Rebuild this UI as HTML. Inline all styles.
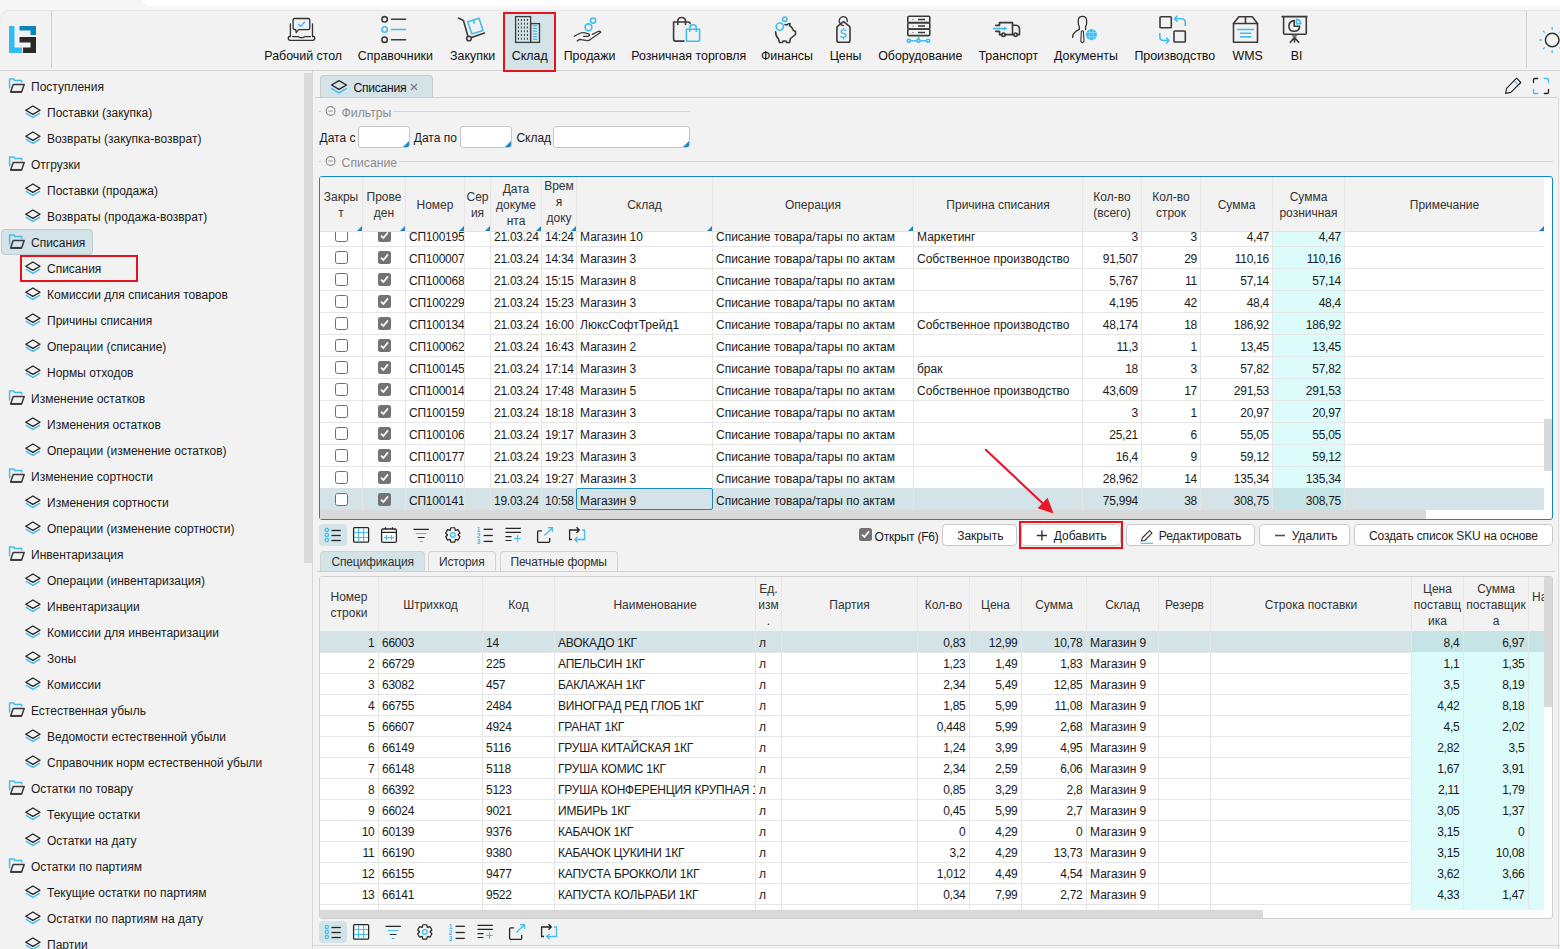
<!DOCTYPE html><html><head><meta charset="utf-8"><style>
*{box-sizing:border-box;margin:0;padding:0}
html,body{width:1560px;height:949px;overflow:hidden;background:#f2f2f2;font-family:"Liberation Sans",sans-serif;font-size:12px;color:#1a1a1a;letter-spacing:0px}
.abs{position:absolute}
.t{position:absolute;white-space:nowrap;line-height:16px}
.hl{position:absolute;height:1px}
.vl{position:absolute;width:1px}
.cell{position:absolute;white-space:nowrap;overflow:hidden;line-height:21px}
.num{letter-spacing:-0.25px}
.nm{letter-spacing:-0.22px}
.cb{position:absolute;width:13px;height:13px;border:1.3px solid #6e6e6e;border-radius:2.5px;background:#fff}
.cbc{position:absolute;width:13px;height:13px;border-radius:2.5px;background:#737373}
.btn{position:absolute;height:22px;border:1px solid #c9c9c9;border-radius:4px;background:#fff;line-height:20px;white-space:nowrap}
</style></head><body><div class="abs" style="left:0;top:0;width:1560px;height:11px;background:#f6f6f6"></div><div class="abs" style="left:143px;top:0;width:1417px;height:6px;background:#fff;border-bottom-left-radius:10px"></div><div class="hl" style="left:0;top:10px;width:1560px;background:#e6e6e6"></div><div class="abs" style="left:0;top:11px;width:1560px;height:59px;background:#f2f2f2"></div><div class="abs" style="left:0;top:10px;width:12px;height:12px;background:#f6f6f6"></div><div class="abs" style="left:0;top:10px;width:14px;height:14px;background:#f2f2f2;border-top:1px solid #e6e6e6;border-left:1px solid #e9e9e9;border-top-left-radius:9px"></div><div class="hl" style="left:0;top:70px;width:1560px;background:#d2d2d2"></div><div class="vl" style="left:51px;top:11px;height:57px;background:#cfcfcf"></div><div class="vl" style="left:1526px;top:11px;height:57px;background:#cfcfcf"></div><svg class="abs" style="left:0;top:0" width="60" height="70"><rect x="9" y="26" width="5.5" height="27" fill="#2ebcf2"/><rect x="9" y="47.5" width="13" height="5.5" fill="#2ebcf2"/><rect x="19.5" y="26" width="16.5" height="4.5" fill="#0a86bd"/><rect x="30.5" y="26" width="5.5" height="9" fill="#0a86bd"/><path d="M19.5 37H36V53H23V47.5H30.5V42.5H19.5Z" fill="#2a2a2a"/></svg><div class="abs" style="left:505px;top:14px;width:49px;height:56px;background:#d3e3e8;border-radius:3px"></div><div class="abs" style="left:503px;top:12px;width:53px;height:60px;border:2px solid #e3141c"></div><div class="t" style="left:243.2px;top:48px;width:120px;text-align:center;font-size:12.4px;color:#111">Рабочий стол</div><div class="t" style="left:335.4px;top:48px;width:120px;text-align:center;font-size:12.4px;color:#111">Справочники</div><div class="t" style="left:412.7px;top:48px;width:120px;text-align:center;font-size:12.4px;color:#111">Закупки</div><div class="t" style="left:469.70000000000005px;top:48px;width:120px;text-align:center;font-size:12.4px;color:#111">Склад</div><div class="t" style="left:529.6px;top:48px;width:120px;text-align:center;font-size:12.4px;color:#111">Продажи</div><div class="t" style="left:628.7px;top:48px;width:120px;text-align:center;font-size:12.4px;color:#111">Розничная торговля</div><div class="t" style="left:726.9px;top:48px;width:120px;text-align:center;font-size:12.4px;color:#111">Финансы</div><div class="t" style="left:785.6px;top:48px;width:120px;text-align:center;font-size:12.4px;color:#111">Цены</div><div class="t" style="left:860.3px;top:48px;width:120px;text-align:center;font-size:12.4px;color:#111">Оборудование</div><div class="t" style="left:948.3px;top:48px;width:120px;text-align:center;font-size:12.4px;color:#111">Транспорт</div><div class="t" style="left:1026px;top:48px;width:120px;text-align:center;font-size:12.4px;color:#111">Документы</div><div class="t" style="left:1114.8px;top:48px;width:120px;text-align:center;font-size:12.4px;color:#111">Производство</div><div class="t" style="left:1187.6px;top:48px;width:120px;text-align:center;font-size:12.4px;color:#111">WMS</div><div class="t" style="left:1236.5px;top:48px;width:120px;text-align:center;font-size:12.4px;color:#111">BI</div><svg class="abs" style="left:0;top:0" width="1560" height="70"><path d="M290.4 23.8V36.2M312.5 23.8V36.2" stroke="#333" stroke-width="1.3" fill="none" stroke-linecap="round" stroke-linejoin="round"/><path d="M290.4 36.5H289.5Q288.3 36.5 288.3 37.7V38.5Q288.3 40.3 290.2 40.3H312.8Q314.7 40.3 314.7 38.5V37.7Q314.7 36.5 313.5 36.5H312.5" stroke="#333" stroke-width="1.3" fill="none" stroke-linecap="round" stroke-linejoin="round"/><path d="M292.5 36.6H298.5Q299.2 37.6 300.5 37.6H302.5Q303.8 37.6 304.5 36.6H310.5" stroke="#333" stroke-width="1.3" fill="none" stroke-linecap="round" stroke-linejoin="round"/><path d="M294.5 18.5H308.4Q309.8 18.5 309.8 19.9V28.3Q309.8 29.7 308.4 29.7H298.6L296.2 32.6L295.8 29.7H294.5Q293.1 29.7 293.1 28.3V19.9Q293.1 18.5 294.5 18.5Z" stroke="#333" stroke-width="1.3" fill="none" stroke-linecap="round" stroke-linejoin="round"/><path d="M298.5 24.3L300.5 26.4L304.6 22" stroke="#41bdf0" stroke-width="1.4" fill="none" stroke-linecap="round" stroke-linejoin="round"/><circle cx="384.6" cy="19.3" r="2.7" stroke="#3a3a3a" stroke-width="1.6" fill="none" stroke-linecap="round" stroke-linejoin="round"/><path d="M391.5 19.2H405.5" stroke="#3a3a3a" stroke-width="1.6" fill="none" stroke-linecap="round" stroke-linejoin="round"/><circle cx="384.6" cy="29.5" r="2.7" stroke="#41bdf0" stroke-width="1.6" fill="none" stroke-linecap="round" stroke-linejoin="round"/><path d="M391.5 29.5H405.5" stroke="#41bdf0" stroke-width="1.6" fill="none" stroke-linecap="round" stroke-linejoin="round"/><circle cx="384.6" cy="39.7" r="2.7" stroke="#3a3a3a" stroke-width="1.6" fill="none" stroke-linecap="round" stroke-linejoin="round"/><path d="M391.5 39.7H405.5" stroke="#3a3a3a" stroke-width="1.6" fill="none" stroke-linecap="round" stroke-linejoin="round"/><path d="M458.5 18L463.5 20.6L468 36.5" stroke="#3a3a3a" stroke-width="1.6" fill="none" stroke-linecap="round" stroke-linejoin="round"/><circle cx="469" cy="38.5" r="2.3" stroke="#3a3a3a" stroke-width="1.6" fill="none" stroke-linecap="round" stroke-linejoin="round"/><path d="M471.5 37.5L484.5 33" stroke="#3a3a3a" stroke-width="1.6" fill="none" stroke-linecap="round" stroke-linejoin="round"/><path d="M467.8 21.8L479 18.2L483 30.5L471.8 34Z" stroke="#41bdf0" stroke-width="1.6" fill="none" stroke-linecap="round" stroke-linejoin="round"/><path d="M473.5 20L474.3 23" stroke="#41bdf0" stroke-width="1.6" fill="none" stroke-linecap="round" stroke-linejoin="round"/><rect x="515.6" y="16.6" width="15" height="25.8" fill="none" stroke="#3a3a3a" stroke-width="1.3"/><rect x="530.6" y="23.6" width="8.9" height="18.8" fill="none" stroke="#3a3a3a" stroke-width="1.3"/><rect x="517.9" y="19.00" width="1" height="2" fill="#3a3a3a"/><rect x="520.9" y="19.00" width="1" height="2" fill="#3a3a3a"/><rect x="523.9" y="19.00" width="1" height="2" fill="#3a3a3a"/><rect x="526.9" y="19.00" width="1" height="2" fill="#3a3a3a"/><rect x="517.9" y="22.75" width="1" height="2" fill="#3a3a3a"/><rect x="520.9" y="22.75" width="1" height="2" fill="#3a3a3a"/><rect x="523.9" y="22.75" width="1" height="2" fill="#3a3a3a"/><rect x="526.9" y="22.75" width="1" height="2" fill="#3a3a3a"/><rect x="517.9" y="26.50" width="1" height="2" fill="#3a3a3a"/><rect x="520.9" y="26.50" width="1" height="2" fill="#3a3a3a"/><rect x="523.9" y="26.50" width="1" height="2" fill="#3a3a3a"/><rect x="526.9" y="26.50" width="1" height="2" fill="#3a3a3a"/><rect x="517.9" y="30.25" width="1" height="2" fill="#3a3a3a"/><rect x="520.9" y="30.25" width="1" height="2" fill="#3a3a3a"/><rect x="523.9" y="30.25" width="1" height="2" fill="#3a3a3a"/><rect x="526.9" y="30.25" width="1" height="2" fill="#3a3a3a"/><rect x="517.9" y="34.00" width="1" height="2" fill="#3a3a3a"/><rect x="520.9" y="34.00" width="1" height="2" fill="#3a3a3a"/><rect x="523.9" y="34.00" width="1" height="2" fill="#3a3a3a"/><rect x="526.9" y="34.00" width="1" height="2" fill="#3a3a3a"/><rect x="517.9" y="37.75" width="1" height="2" fill="#3a3a3a"/><rect x="520.9" y="37.75" width="1" height="2" fill="#3a3a3a"/><rect x="523.9" y="37.75" width="1" height="2" fill="#3a3a3a"/><rect x="526.9" y="37.75" width="1" height="2" fill="#3a3a3a"/><rect x="533" y="25.2" width="4" height="1.2" fill="#41bdf0"/><rect x="533" y="27.9" width="4" height="1.2" fill="#41bdf0"/><rect x="533" y="30.6" width="4" height="1.2" fill="#41bdf0"/><rect x="533" y="33.3" width="4" height="1.2" fill="#41bdf0"/><rect x="533" y="36.0" width="4" height="1.2" fill="#41bdf0"/><rect x="533" y="38.7" width="4" height="1.2" fill="#41bdf0"/><circle cx="593.1" cy="20.6" r="2.6" stroke="#41bdf0" stroke-width="1.6" fill="none" stroke-linecap="round" stroke-linejoin="round"/><circle cx="588.5" cy="27.3" r="3.4" stroke="#41bdf0" stroke-width="1.6" fill="none" stroke-linecap="round" stroke-linejoin="round"/><path d="M574.4 36.3L580.5 33Q583.5 32 586 33.2Q589.5 33.8 589.5 35.2Q589 36.4 587 36.4H583.6" stroke="#3a3a3a" stroke-width="1.3" fill="none" stroke-linecap="round" stroke-linejoin="round"/><path d="M592.4 34.4L598 31.5Q599.8 30.8 600.8 32.3L590.2 39.5Q589 40.8 587.5 40.7L579.5 39.4L577.3 40.9" stroke="#3a3a3a" stroke-width="1.3" fill="none" stroke-linecap="round" stroke-linejoin="round"/><path d="M690.2 23.6Q690 22 688.5 22H673.6V39Q673.6 41.1 675.7 41.1H684" stroke="#3a3a3a" stroke-width="1.6" fill="none" stroke-linecap="round" stroke-linejoin="round"/><path d="M677.8 24.5V21.3Q677.8 17.5 681.7 17.5Q685.5 17.5 685.5 21.3V24.5" stroke="#3a3a3a" stroke-width="1.6" fill="none" stroke-linecap="round" stroke-linejoin="round"/><path d="M686.4 29.3H699.6V39.4Q699.6 41.3 697.7 41.3H688.3Q686.4 41.3 686.4 39.4Z" stroke="#41bdf0" stroke-width="1.6" fill="none" stroke-linecap="round" stroke-linejoin="round"/><path d="M689.8 31.5V28.2Q689.8 24.8 693 24.8Q696.3 24.8 696.3 28.2V31.5" stroke="#41bdf0" stroke-width="1.6" fill="none" stroke-linecap="round" stroke-linejoin="round"/><circle cx="784.7" cy="19.2" r="2.2" stroke="#41bdf0" stroke-width="1.6" fill="none" stroke-linecap="round" stroke-linejoin="round"/><circle cx="779.8" cy="26.6" r="3.6" stroke="#41bdf0" stroke-width="1.6" fill="none" stroke-linecap="round" stroke-linejoin="round"/><path d="M775.6 31.8Q775.5 36 778.5 39L779.5 42.5H782.5L783 41H786L786.5 42.5H789.5L790.5 38.5Q793 36.5 795.5 34.5V31.5L793.5 30.5Q792 27 789.5 25.5L790 23.5Q788 23.5 786.5 25L785 24.5" stroke="#3a3a3a" stroke-width="1.6" fill="none" stroke-linecap="round" stroke-linejoin="round"/><path d="M843.5 21.6L849.2 26.2Q850 26.9 850 28V40.2Q850 42.3 848 42.3H839Q836.9 42.3 836.9 40.2V28Q836.9 26.9 837.8 26.2Z" stroke="#3a3a3a" stroke-width="1.6" fill="none" stroke-linecap="round" stroke-linejoin="round"/><path d="M847.3 21.6A4.1 4.1 0 1 0 840.3 23.6Q841.6 25.6 843.6 25.6" stroke="#3a3a3a" stroke-width="1.4" fill="none" stroke-linecap="round"/><path d="M846 30.7Q845.3 29.8 843.5 29.8Q841.1 29.8 841.1 31.6Q841.1 33.3 843.5 33.5Q846.1 33.7 846.1 35.6Q846.1 37.4 843.5 37.4Q841.5 37.4 840.8 36.5M843.5 28.4V29.8M843.5 37.4V39" stroke="#41bdf0" stroke-width="1.3" fill="none" stroke-linecap="round"/><rect x="907.8" y="16.3" width="22" height="6.3" rx="1.2" stroke="#3a3a3a" stroke-width="1.6" fill="none" stroke-linecap="round" stroke-linejoin="round"/><rect x="907.8" y="22.8" width="22" height="6.3" rx="1.2" stroke="#3a3a3a" stroke-width="1.6" fill="none" stroke-linecap="round" stroke-linejoin="round"/><rect x="907.8" y="29.3" width="22" height="6.3" rx="1.2" stroke="#3a3a3a" stroke-width="1.6" fill="none" stroke-linecap="round" stroke-linejoin="round"/><path d="M918 19.5H925M918 26H925M918 32.5H925" stroke="#3a3a3a" stroke-width="1.4"/><circle cx="913" cy="19.5" r=".6" fill="#3a3a3a"/><circle cx="913" cy="26" r=".6" fill="#3a3a3a"/><circle cx="913" cy="32.5" r=".6" fill="#3a3a3a"/><path d="M910.5 40.8H916.5M920.5 40.8H926M918.5 37V39" stroke="#41bdf0" stroke-width="1.6" fill="none" stroke-linecap="round" stroke-linejoin="round"/><circle cx="908.8" cy="40.8" r="1.6" stroke="#41bdf0" stroke-width="1.6" fill="none" stroke-linecap="round" stroke-linejoin="round"/><circle cx="918.5" cy="40.8" r="1.6" stroke="#41bdf0" stroke-width="1.6" fill="none" stroke-linecap="round" stroke-linejoin="round"/><circle cx="928.1" cy="40.8" r="1.6" stroke="#41bdf0" stroke-width="1.6" fill="none" stroke-linecap="round" stroke-linejoin="round"/><path d="M995.8 25.4H999.5V22.6H1012.5V34.6" stroke="#3a3a3a" stroke-width="1.6" fill="none" stroke-linecap="round" stroke-linejoin="round"/><path d="M1012.5 25.2H1016Q1019.5 25.5 1019.5 29.2V34.6H1017.3" stroke="#3a3a3a" stroke-width="1.6" fill="none" stroke-linecap="round" stroke-linejoin="round"/><path d="M995.8 31.4H999.5V34.6H1001.7M1005.2 34.6H1013.8" stroke="#3a3a3a" stroke-width="1.6" fill="none" stroke-linecap="round" stroke-linejoin="round"/><circle cx="1003.4" cy="34.7" r="1.7" stroke="#3a3a3a" stroke-width="1.6" fill="none" stroke-linecap="round" stroke-linejoin="round"/><circle cx="1015.6" cy="34.7" r="1.7" stroke="#3a3a3a" stroke-width="1.6" fill="none" stroke-linecap="round" stroke-linejoin="round"/><path d="M993.6 28.6H1004.5" stroke="#41bdf0" stroke-width="1.6" stroke-linecap="round"/><path d="M1004.3 26.4L1007.4 28.6L1004.3 30.8Z" fill="#41bdf0"/><path d="M1079.3 29.2V26.4Q1078.3 25.2 1078.3 23.5V20.6Q1078.3 16.4 1082.4 16.4Q1086.6 16.4 1086.6 20.6V23.5Q1086.6 25.2 1085.6 26.4V29.6" stroke="#333" stroke-width="1.3" fill="none" stroke-linecap="round"/><path d="M1079.3 29.4Q1072.6 32.2 1072.6 37.4" stroke="#333" stroke-width="1.3" fill="none" stroke-linecap="round"/><path d="M1081.4 31L1080.8 41.4L1082.4 42.8L1084 41.4L1083.4 31Z" stroke="#333" stroke-width="1.1" fill="none" stroke-linejoin="round"/><circle cx="1091.4" cy="34.6" r="5.6" fill="#41bdf0"/><path d="M1086 32.5H1096.8M1086 36.7H1096.8M1089.6 29.2V40M1093.2 29.2V40" stroke="#fff" stroke-width=".6" opacity=".55"/><rect x="1160" y="16.8" width="11.3" height="11" rx=".8" stroke="#3a3a3a" stroke-width="1.6" fill="none" stroke-linecap="round" stroke-linejoin="round"/><rect x="1174" y="31" width="11.3" height="11" rx=".8" stroke="#3a3a3a" stroke-width="1.6" fill="none" stroke-linecap="round" stroke-linejoin="round"/><path d="M1185.3 25.5V22.5Q1185.3 18.8 1181.5 18.8H1174.5M1177 16.3L1174.5 18.8L1177 21.3" stroke="#41bdf0" stroke-width="1.6" fill="none" stroke-linecap="round" stroke-linejoin="round"/><path d="M1159.8 33.5V36.5Q1159.8 40.5 1163.5 40.5H1169M1166.5 38L1169 40.5L1166.5 43" stroke="#41bdf0" stroke-width="1.6" fill="none" stroke-linecap="round" stroke-linejoin="round"/><path d="M1238.8 16.8H1252.3L1257.5 23.5V42.2H1233.5V23.5Z" stroke="#3a3a3a" stroke-width="1.6" fill="none" stroke-linecap="round" stroke-linejoin="round"/><path d="M1233.5 23.5H1257.5M1245.5 16.8V23.5" stroke="#3a3a3a" stroke-width="1.6" fill="none" stroke-linecap="round" stroke-linejoin="round"/><path d="M1237.5 29.5H1253.5M1240.5 33.3H1250.8M1240.5 36.9H1250.8" stroke="#41bdf0" stroke-width="1.6" fill="none" stroke-linecap="round" stroke-linejoin="round"/><path d="M1281.5 16.6H1307.5" stroke="#3a3a3a" stroke-width="1.8"/><path d="M1283.6 17V33.3Q1283.6 34.3 1284.6 34.3H1305.3Q1306.3 34.3 1306.3 33.3V17" stroke="#3a3a3a" stroke-width="1.6" fill="none" stroke-linecap="round" stroke-linejoin="round"/><path d="M1290.3 42.3L1294.5 37.6L1298.7 42.3M1294.5 37.6V42" stroke="#3a3a3a" stroke-width="1.6" fill="none" stroke-linecap="round" stroke-linejoin="round"/><path d="M1291.8 35.2H1297.2M1292.5 36.8H1296.5" stroke="#555" stroke-width="1.3"/><path d="M1294.2 20.6Q1288.9 21.2 1288.9 26.2Q1289.1 31.3 1294.3 31.3Q1299.4 31.2 1299.6 26.2H1294.2Z" stroke="#3a3a3a" stroke-width="1.6" fill="none" stroke-linecap="round" stroke-linejoin="round"/><path d="M1296.5 19.4V23.7H1300.8Q1300.5 19.7 1296.5 19.4Z" stroke="#41bdf0" stroke-width="1.6" fill="none" stroke-linecap="round" stroke-linejoin="round"/><circle cx="1552.2" cy="40" r="6.8" stroke="#333" stroke-width="1.5" fill="none"/><path d="M1562.5 40.0L1565.2 40.0" stroke="#41bdf0" stroke-width="1.3"/><path d="M1559.5 47.3L1561.4 49.2" stroke="#41bdf0" stroke-width="1.3"/><path d="M1552.2 50.3L1552.2 53.0" stroke="#41bdf0" stroke-width="1.3"/><path d="M1544.9 47.3L1543.0 49.2" stroke="#41bdf0" stroke-width="1.3"/><path d="M1541.9 40.0L1539.2 40.0" stroke="#41bdf0" stroke-width="1.3"/><path d="M1544.9 32.7L1543.0 30.8" stroke="#41bdf0" stroke-width="1.3"/><path d="M1552.2 29.7L1552.2 27.0" stroke="#41bdf0" stroke-width="1.3"/><path d="M1559.5 32.7L1561.4 30.8" stroke="#41bdf0" stroke-width="1.3"/></svg><div class="abs" style="left:1px;top:229px;width:92px;height:26px;background:#d3e3e8;border:1px solid #bfcbcf;border-radius:4px"></div><div class="abs" style="left:20px;top:255px;width:118px;height:27px;border:2px solid #e3141c"></div><div class="t" style="left:31px;top:79px;font-size:12px">Поступления</div><div class="t" style="left:47px;top:105px;font-size:12px">Поставки (закупка)</div><div class="t" style="left:47px;top:131px;font-size:12px">Возвраты (закупка-возврат)</div><div class="t" style="left:31px;top:157px;font-size:12px">Отгрузки</div><div class="t" style="left:47px;top:183px;font-size:12px">Поставки (продажа)</div><div class="t" style="left:47px;top:209px;font-size:12px">Возвраты (продажа-возврат)</div><div class="t" style="left:31px;top:235px;font-size:12px">Списания</div><div class="t" style="left:47px;top:261px;font-size:12px">Списания</div><div class="t" style="left:47px;top:287px;font-size:12px">Комиссии для списания товаров</div><div class="t" style="left:47px;top:313px;font-size:12px">Причины списания</div><div class="t" style="left:47px;top:339px;font-size:12px">Операции (списание)</div><div class="t" style="left:47px;top:365px;font-size:12px">Нормы отходов</div><div class="t" style="left:31px;top:391px;font-size:12px">Изменение остатков</div><div class="t" style="left:47px;top:417px;font-size:12px">Изменения остатков</div><div class="t" style="left:47px;top:443px;font-size:12px">Операции (изменение остатков)</div><div class="t" style="left:31px;top:469px;font-size:12px">Изменение сортности</div><div class="t" style="left:47px;top:495px;font-size:12px">Изменения сортности</div><div class="t" style="left:47px;top:521px;font-size:12px">Операции (изменение сортности)</div><div class="t" style="left:31px;top:547px;font-size:12px">Инвентаризация</div><div class="t" style="left:47px;top:573px;font-size:12px">Операции (инвентаризация)</div><div class="t" style="left:47px;top:599px;font-size:12px">Инвентаризации</div><div class="t" style="left:47px;top:625px;font-size:12px">Комиссии для инвентаризации</div><div class="t" style="left:47px;top:651px;font-size:12px">Зоны</div><div class="t" style="left:47px;top:677px;font-size:12px">Комиссии</div><div class="t" style="left:31px;top:703px;font-size:12px">Естественная убыль</div><div class="t" style="left:47px;top:729px;font-size:12px">Ведомости естественной убыли</div><div class="t" style="left:47px;top:755px;font-size:12px">Справочник норм естественной убыли</div><div class="t" style="left:31px;top:781px;font-size:12px">Остатки по товару</div><div class="t" style="left:47px;top:807px;font-size:12px">Текущие остатки</div><div class="t" style="left:47px;top:833px;font-size:12px">Остатки на дату</div><div class="t" style="left:31px;top:859px;font-size:12px">Остатки по партиям</div><div class="t" style="left:47px;top:885px;font-size:12px">Текущие остатки по партиям</div><div class="t" style="left:47px;top:911px;font-size:12px">Остатки по партиям на дату</div><div class="t" style="left:47px;top:937px;font-size:12px">Партии</div><svg class="abs" style="left:0;top:0" width="60" height="949"><g transform="translate(0 0)"><path d="M9.6 88.5V79H13.8L14.8 80.6H21.6V82.5" stroke="#41bdf0" stroke-width="1.5" fill="none"/><path d="M13.2 84.6H24.2L21.6 91.9H10.6Z" stroke="#3a3a3a" stroke-width="1.5" fill="none" stroke-linejoin="round"/><path d="M10.6 91.9H21.6" stroke="#3a3a3a" stroke-width="1.9"/></g><g transform="translate(0 0)"><path d="M25.8 110.2L32.9 106L40 110.2L32.9 114.4Z" stroke="#222" stroke-width="1.3" fill="none" stroke-linejoin="round"/><path d="M25.8 113.2L32.9 117.4L40 113.2" stroke="#41bdf0" stroke-width="1.5" fill="none"/></g><g transform="translate(0 26)"><path d="M25.8 110.2L32.9 106L40 110.2L32.9 114.4Z" stroke="#222" stroke-width="1.3" fill="none" stroke-linejoin="round"/><path d="M25.8 113.2L32.9 117.4L40 113.2" stroke="#41bdf0" stroke-width="1.5" fill="none"/></g><g transform="translate(0 78)"><path d="M9.6 88.5V79H13.8L14.8 80.6H21.6V82.5" stroke="#41bdf0" stroke-width="1.5" fill="none"/><path d="M13.2 84.6H24.2L21.6 91.9H10.6Z" stroke="#3a3a3a" stroke-width="1.5" fill="none" stroke-linejoin="round"/><path d="M10.6 91.9H21.6" stroke="#3a3a3a" stroke-width="1.9"/></g><g transform="translate(0 78)"><path d="M25.8 110.2L32.9 106L40 110.2L32.9 114.4Z" stroke="#222" stroke-width="1.3" fill="none" stroke-linejoin="round"/><path d="M25.8 113.2L32.9 117.4L40 113.2" stroke="#41bdf0" stroke-width="1.5" fill="none"/></g><g transform="translate(0 104)"><path d="M25.8 110.2L32.9 106L40 110.2L32.9 114.4Z" stroke="#222" stroke-width="1.3" fill="none" stroke-linejoin="round"/><path d="M25.8 113.2L32.9 117.4L40 113.2" stroke="#41bdf0" stroke-width="1.5" fill="none"/></g><g transform="translate(0 156)"><path d="M9.6 88.5V79H13.8L14.8 80.6H21.6V82.5" stroke="#41bdf0" stroke-width="1.5" fill="none"/><path d="M13.2 84.6H24.2L21.6 91.9H10.6Z" stroke="#3a3a3a" stroke-width="1.5" fill="none" stroke-linejoin="round"/><path d="M10.6 91.9H21.6" stroke="#3a3a3a" stroke-width="1.9"/></g><g transform="translate(0 156)"><path d="M25.8 110.2L32.9 106L40 110.2L32.9 114.4Z" stroke="#222" stroke-width="1.3" fill="none" stroke-linejoin="round"/><path d="M25.8 113.2L32.9 117.4L40 113.2" stroke="#41bdf0" stroke-width="1.5" fill="none"/></g><g transform="translate(0 182)"><path d="M25.8 110.2L32.9 106L40 110.2L32.9 114.4Z" stroke="#222" stroke-width="1.3" fill="none" stroke-linejoin="round"/><path d="M25.8 113.2L32.9 117.4L40 113.2" stroke="#41bdf0" stroke-width="1.5" fill="none"/></g><g transform="translate(0 208)"><path d="M25.8 110.2L32.9 106L40 110.2L32.9 114.4Z" stroke="#222" stroke-width="1.3" fill="none" stroke-linejoin="round"/><path d="M25.8 113.2L32.9 117.4L40 113.2" stroke="#41bdf0" stroke-width="1.5" fill="none"/></g><g transform="translate(0 234)"><path d="M25.8 110.2L32.9 106L40 110.2L32.9 114.4Z" stroke="#222" stroke-width="1.3" fill="none" stroke-linejoin="round"/><path d="M25.8 113.2L32.9 117.4L40 113.2" stroke="#41bdf0" stroke-width="1.5" fill="none"/></g><g transform="translate(0 260)"><path d="M25.8 110.2L32.9 106L40 110.2L32.9 114.4Z" stroke="#222" stroke-width="1.3" fill="none" stroke-linejoin="round"/><path d="M25.8 113.2L32.9 117.4L40 113.2" stroke="#41bdf0" stroke-width="1.5" fill="none"/></g><g transform="translate(0 312)"><path d="M9.6 88.5V79H13.8L14.8 80.6H21.6V82.5" stroke="#41bdf0" stroke-width="1.5" fill="none"/><path d="M13.2 84.6H24.2L21.6 91.9H10.6Z" stroke="#3a3a3a" stroke-width="1.5" fill="none" stroke-linejoin="round"/><path d="M10.6 91.9H21.6" stroke="#3a3a3a" stroke-width="1.9"/></g><g transform="translate(0 312)"><path d="M25.8 110.2L32.9 106L40 110.2L32.9 114.4Z" stroke="#222" stroke-width="1.3" fill="none" stroke-linejoin="round"/><path d="M25.8 113.2L32.9 117.4L40 113.2" stroke="#41bdf0" stroke-width="1.5" fill="none"/></g><g transform="translate(0 338)"><path d="M25.8 110.2L32.9 106L40 110.2L32.9 114.4Z" stroke="#222" stroke-width="1.3" fill="none" stroke-linejoin="round"/><path d="M25.8 113.2L32.9 117.4L40 113.2" stroke="#41bdf0" stroke-width="1.5" fill="none"/></g><g transform="translate(0 390)"><path d="M9.6 88.5V79H13.8L14.8 80.6H21.6V82.5" stroke="#41bdf0" stroke-width="1.5" fill="none"/><path d="M13.2 84.6H24.2L21.6 91.9H10.6Z" stroke="#3a3a3a" stroke-width="1.5" fill="none" stroke-linejoin="round"/><path d="M10.6 91.9H21.6" stroke="#3a3a3a" stroke-width="1.9"/></g><g transform="translate(0 390)"><path d="M25.8 110.2L32.9 106L40 110.2L32.9 114.4Z" stroke="#222" stroke-width="1.3" fill="none" stroke-linejoin="round"/><path d="M25.8 113.2L32.9 117.4L40 113.2" stroke="#41bdf0" stroke-width="1.5" fill="none"/></g><g transform="translate(0 416)"><path d="M25.8 110.2L32.9 106L40 110.2L32.9 114.4Z" stroke="#222" stroke-width="1.3" fill="none" stroke-linejoin="round"/><path d="M25.8 113.2L32.9 117.4L40 113.2" stroke="#41bdf0" stroke-width="1.5" fill="none"/></g><g transform="translate(0 468)"><path d="M9.6 88.5V79H13.8L14.8 80.6H21.6V82.5" stroke="#41bdf0" stroke-width="1.5" fill="none"/><path d="M13.2 84.6H24.2L21.6 91.9H10.6Z" stroke="#3a3a3a" stroke-width="1.5" fill="none" stroke-linejoin="round"/><path d="M10.6 91.9H21.6" stroke="#3a3a3a" stroke-width="1.9"/></g><g transform="translate(0 468)"><path d="M25.8 110.2L32.9 106L40 110.2L32.9 114.4Z" stroke="#222" stroke-width="1.3" fill="none" stroke-linejoin="round"/><path d="M25.8 113.2L32.9 117.4L40 113.2" stroke="#41bdf0" stroke-width="1.5" fill="none"/></g><g transform="translate(0 494)"><path d="M25.8 110.2L32.9 106L40 110.2L32.9 114.4Z" stroke="#222" stroke-width="1.3" fill="none" stroke-linejoin="round"/><path d="M25.8 113.2L32.9 117.4L40 113.2" stroke="#41bdf0" stroke-width="1.5" fill="none"/></g><g transform="translate(0 520)"><path d="M25.8 110.2L32.9 106L40 110.2L32.9 114.4Z" stroke="#222" stroke-width="1.3" fill="none" stroke-linejoin="round"/><path d="M25.8 113.2L32.9 117.4L40 113.2" stroke="#41bdf0" stroke-width="1.5" fill="none"/></g><g transform="translate(0 546)"><path d="M25.8 110.2L32.9 106L40 110.2L32.9 114.4Z" stroke="#222" stroke-width="1.3" fill="none" stroke-linejoin="round"/><path d="M25.8 113.2L32.9 117.4L40 113.2" stroke="#41bdf0" stroke-width="1.5" fill="none"/></g><g transform="translate(0 572)"><path d="M25.8 110.2L32.9 106L40 110.2L32.9 114.4Z" stroke="#222" stroke-width="1.3" fill="none" stroke-linejoin="round"/><path d="M25.8 113.2L32.9 117.4L40 113.2" stroke="#41bdf0" stroke-width="1.5" fill="none"/></g><g transform="translate(0 624)"><path d="M9.6 88.5V79H13.8L14.8 80.6H21.6V82.5" stroke="#41bdf0" stroke-width="1.5" fill="none"/><path d="M13.2 84.6H24.2L21.6 91.9H10.6Z" stroke="#3a3a3a" stroke-width="1.5" fill="none" stroke-linejoin="round"/><path d="M10.6 91.9H21.6" stroke="#3a3a3a" stroke-width="1.9"/></g><g transform="translate(0 624)"><path d="M25.8 110.2L32.9 106L40 110.2L32.9 114.4Z" stroke="#222" stroke-width="1.3" fill="none" stroke-linejoin="round"/><path d="M25.8 113.2L32.9 117.4L40 113.2" stroke="#41bdf0" stroke-width="1.5" fill="none"/></g><g transform="translate(0 650)"><path d="M25.8 110.2L32.9 106L40 110.2L32.9 114.4Z" stroke="#222" stroke-width="1.3" fill="none" stroke-linejoin="round"/><path d="M25.8 113.2L32.9 117.4L40 113.2" stroke="#41bdf0" stroke-width="1.5" fill="none"/></g><g transform="translate(0 702)"><path d="M9.6 88.5V79H13.8L14.8 80.6H21.6V82.5" stroke="#41bdf0" stroke-width="1.5" fill="none"/><path d="M13.2 84.6H24.2L21.6 91.9H10.6Z" stroke="#3a3a3a" stroke-width="1.5" fill="none" stroke-linejoin="round"/><path d="M10.6 91.9H21.6" stroke="#3a3a3a" stroke-width="1.9"/></g><g transform="translate(0 702)"><path d="M25.8 110.2L32.9 106L40 110.2L32.9 114.4Z" stroke="#222" stroke-width="1.3" fill="none" stroke-linejoin="round"/><path d="M25.8 113.2L32.9 117.4L40 113.2" stroke="#41bdf0" stroke-width="1.5" fill="none"/></g><g transform="translate(0 728)"><path d="M25.8 110.2L32.9 106L40 110.2L32.9 114.4Z" stroke="#222" stroke-width="1.3" fill="none" stroke-linejoin="round"/><path d="M25.8 113.2L32.9 117.4L40 113.2" stroke="#41bdf0" stroke-width="1.5" fill="none"/></g><g transform="translate(0 780)"><path d="M9.6 88.5V79H13.8L14.8 80.6H21.6V82.5" stroke="#41bdf0" stroke-width="1.5" fill="none"/><path d="M13.2 84.6H24.2L21.6 91.9H10.6Z" stroke="#3a3a3a" stroke-width="1.5" fill="none" stroke-linejoin="round"/><path d="M10.6 91.9H21.6" stroke="#3a3a3a" stroke-width="1.9"/></g><g transform="translate(0 780)"><path d="M25.8 110.2L32.9 106L40 110.2L32.9 114.4Z" stroke="#222" stroke-width="1.3" fill="none" stroke-linejoin="round"/><path d="M25.8 113.2L32.9 117.4L40 113.2" stroke="#41bdf0" stroke-width="1.5" fill="none"/></g><g transform="translate(0 806)"><path d="M25.8 110.2L32.9 106L40 110.2L32.9 114.4Z" stroke="#222" stroke-width="1.3" fill="none" stroke-linejoin="round"/><path d="M25.8 113.2L32.9 117.4L40 113.2" stroke="#41bdf0" stroke-width="1.5" fill="none"/></g><g transform="translate(0 832)"><path d="M25.8 110.2L32.9 106L40 110.2L32.9 114.4Z" stroke="#222" stroke-width="1.3" fill="none" stroke-linejoin="round"/><path d="M25.8 113.2L32.9 117.4L40 113.2" stroke="#41bdf0" stroke-width="1.5" fill="none"/></g></svg><div class="abs" style="left:304px;top:73px;width:8px;height:490px;background:#dadada"></div><div class="vl" style="left:312px;top:71px;height:878px;background:#d6d6d6"></div><div class="vl" style="left:1558px;top:98px;height:851px;background:#dedede"></div><div class="hl" style="left:315px;top:97px;width:1242px;background:#cfcfcf"></div><div class="abs" style="left:320px;top:75px;width:113px;height:22px;background:#d3e3e8;border:1px solid #cdcdcd;border-bottom:none;border-radius:4px 4px 0 0"></div><svg class="abs" style="left:0;top:0" width="1560" height="100"><path d="M331.6 85L339 80.6L346.5 85L339 89.4Z" stroke="#222" stroke-width="1.3" fill="none" stroke-linejoin="round"/><path d="M331.6 88.4L339 92.8L346.5 88.4" stroke="#41bdf0" stroke-width="1.5" fill="none"/><path d="M411 84L417 90M417 84L411 90" stroke="#777" stroke-width="1.1"/><path d="M1505.6 93.4L1506.6 88.3L1516.5 78.2L1520.8 82.5L1510.8 92.4Z" stroke="#222" stroke-width="1.1" fill="none" stroke-linejoin="round"/><path d="M1514.4 81.2L1518 84.7" stroke="#41bdf0" stroke-width="1.1"/><path d="M1533.5 82.5V79.8Q1533.5 78.5 1534.8 78.5H1537.7" stroke="#222" stroke-width="1.3" fill="none" stroke-linecap="round"/><path d="M1544.3 78.5H1547.2Q1548.5 78.5 1548.5 79.8V82.5" stroke="#41bdf0" stroke-width="1.3" fill="none" stroke-linecap="round"/><path d="M1533.5 89.3V92.2Q1533.5 93.5 1534.8 93.5H1537.7" stroke="#41bdf0" stroke-width="1.3" fill="none" stroke-linecap="round"/><path d="M1544.3 93.5H1547.2Q1548.5 93.5 1548.5 92.2V89.3" stroke="#222" stroke-width="1.3" fill="none" stroke-linecap="round"/></svg><div class="t" style="left:353.5px;top:79.5px;font-size:12.2px;letter-spacing:-0.3px;color:#111">Списания</div><div class="hl" style="left:319px;top:111px;width:2px;background:#cfcfcf"></div><div class="hl" style="left:393px;top:111px;width:297px;background:#d6d6d6"></div><svg class="abs" style="left:324px;top:104px" width="14" height="14"><circle cx="6.6" cy="7" r="4.4" stroke="#8a8a8a" stroke-width="1.1" fill="none"/><path d="M4.3 7H8.9" stroke="#8a8a8a" stroke-width=".9"/></svg><div class="t" style="left:341.6px;top:105px;font-size:12.2px;color:#8c8c8c;background:#f2f2f2;padding-right:2px">Фильтры</div><div class="hl" style="left:319px;top:161px;width:2px;background:#cfcfcf"></div><div class="hl" style="left:393px;top:161px;width:1160px;background:#d6d6d6"></div><svg class="abs" style="left:324px;top:154px" width="14" height="14"><circle cx="6.6" cy="7" r="4.4" stroke="#8a8a8a" stroke-width="1.1" fill="none"/><path d="M4.3 7H8.9" stroke="#8a8a8a" stroke-width=".9"/></svg><div class="t" style="left:341.6px;top:155px;font-size:12.2px;color:#8c8c8c;background:#f2f2f2;padding-right:2px">Списание</div><div class="t" style="left:319.5px;top:130px">Дата с</div><div class="abs" style="left:358px;top:126px;width:52px;height:22px;background:#fff;border:1px solid #c6c6c6;border-radius:3px;overflow:hidden"><div class="abs" style="right:0;bottom:0;width:0;height:0;border-left:6px solid transparent;border-bottom:6px solid #1b87bf"></div></div><div class="t" style="left:413.8px;top:130px">Дата по</div><div class="abs" style="left:460px;top:126px;width:52px;height:22px;background:#fff;border:1px solid #c6c6c6;border-radius:3px;overflow:hidden"><div class="abs" style="right:0;bottom:0;width:0;height:0;border-left:6px solid transparent;border-bottom:6px solid #1b87bf"></div></div><div class="t" style="left:516.4px;top:130px">Склад</div><div class="abs" style="left:553px;top:126px;width:137px;height:22px;background:#fff;border:1px solid #c6c6c6;border-radius:3px;overflow:hidden"><div class="abs" style="right:0;bottom:0;width:0;height:0;border-left:6px solid transparent;border-bottom:6px solid #1b87bf"></div></div><div class="abs" style="left:319px;top:176px;width:1234px;height:344px;background:#fff;border:1px solid #0d88c0;border-radius:3px"></div><div class="abs" style="left:320px;top:177px;width:1224px;height:54px;background:#f2f2f2;border-top-left-radius:2px"></div><div class="hl" style="left:320px;top:231px;width:1224px;background:#e3e3e3"></div><div class="vl" style="left:362px;top:177px;height:333px;background:#e6e6e6"></div><div class="vl" style="left:405px;top:177px;height:333px;background:#e6e6e6"></div><div class="vl" style="left:464px;top:177px;height:333px;background:#e6e6e6"></div><div class="vl" style="left:490px;top:177px;height:333px;background:#e6e6e6"></div><div class="vl" style="left:541px;top:177px;height:333px;background:#e6e6e6"></div><div class="vl" style="left:576px;top:177px;height:333px;background:#e6e6e6"></div><div class="vl" style="left:712px;top:177px;height:333px;background:#e6e6e6"></div><div class="vl" style="left:913px;top:177px;height:333px;background:#e6e6e6"></div><div class="vl" style="left:1082px;top:177px;height:333px;background:#e6e6e6"></div><div class="vl" style="left:1141px;top:177px;height:333px;background:#e6e6e6"></div><div class="vl" style="left:1200px;top:177px;height:333px;background:#e6e6e6"></div><div class="vl" style="left:1272px;top:177px;height:333px;background:#e6e6e6"></div><div class="vl" style="left:1344px;top:177px;height:333px;background:#e6e6e6"></div><div class="t" style="left:320px;top:188.5px;width:42px;text-align:center;color:#333;font-size:12px">Закры<br>т</div><div class="abs" style="left:357px;top:226px;width:0;height:0;border-left:5px solid transparent;border-bottom:5px solid #1b87bf"></div><div class="t" style="left:363px;top:188.5px;width:42px;text-align:center;color:#333;font-size:12px">Прове<br>ден</div><div class="abs" style="left:400px;top:226px;width:0;height:0;border-left:5px solid transparent;border-bottom:5px solid #1b87bf"></div><div class="t" style="left:406px;top:196.5px;width:58px;text-align:center;color:#333;font-size:12px">Номер</div><div class="abs" style="left:459px;top:226px;width:0;height:0;border-left:5px solid transparent;border-bottom:5px solid #1b87bf"></div><div class="t" style="left:465px;top:188.5px;width:25px;text-align:center;color:#333;font-size:12px">Сер<br>ия</div><div class="abs" style="left:485px;top:226px;width:0;height:0;border-left:5px solid transparent;border-bottom:5px solid #1b87bf"></div><div class="t" style="left:491px;top:180.5px;width:50px;text-align:center;color:#333;font-size:12px">Дата<br>докуме<br>нта</div><div class="abs" style="left:536px;top:226px;width:0;height:0;border-left:5px solid transparent;border-bottom:5px solid #1b87bf"></div><div class="t" style="left:542px;top:178.0px;width:34px;text-align:center;color:#333;font-size:12px">Врем<br>я<br>доку</div><div class="abs" style="left:571px;top:226px;width:0;height:0;border-left:5px solid transparent;border-bottom:5px solid #1b87bf"></div><div class="t" style="left:577px;top:196.5px;width:135px;text-align:center;color:#333;font-size:12px">Склад</div><div class="abs" style="left:707px;top:226px;width:0;height:0;border-left:5px solid transparent;border-bottom:5px solid #1b87bf"></div><div class="t" style="left:713px;top:196.5px;width:200px;text-align:center;color:#333;font-size:12px">Операция</div><div class="abs" style="left:908px;top:226px;width:0;height:0;border-left:5px solid transparent;border-bottom:5px solid #1b87bf"></div><div class="t" style="left:914px;top:196.5px;width:168px;text-align:center;color:#333;font-size:12px">Причина списания</div><div class="t" style="left:1083px;top:188.5px;width:58px;text-align:center;color:#333;font-size:12px">Кол-во<br>(всего)</div><div class="t" style="left:1142px;top:188.5px;width:58px;text-align:center;color:#333;font-size:12px">Кол-во<br>строк</div><div class="t" style="left:1201px;top:196.5px;width:71px;text-align:center;color:#333;font-size:12px">Сумма</div><div class="t" style="left:1273px;top:188.5px;width:71px;text-align:center;color:#333;font-size:12px">Сумма<br>розничная</div><div class="t" style="left:1345px;top:196.5px;width:199px;text-align:center;color:#333;font-size:12px">Примечание</div><div class="abs" style="left:1539px;top:226px;width:0;height:0;border-left:5px solid transparent;border-bottom:5px solid #1b87bf"></div><div class="abs" style="left:320px;top:232px;width:1224px;height:278px;overflow:hidden"><div class="abs" style="left:953px;top:-7px;width:71px;height:21px;background:#dcfbfb"></div><div class="hl" style="left:0;top:14px;width:1224px;background:#e6e6e6"></div><div class="vl" style="left:42px;top:-7px;height:22px;background:#e6e6e6"></div><div class="vl" style="left:85px;top:-7px;height:22px;background:#e6e6e6"></div><div class="vl" style="left:144px;top:-7px;height:22px;background:#e6e6e6"></div><div class="vl" style="left:170px;top:-7px;height:22px;background:#e6e6e6"></div><div class="vl" style="left:221px;top:-7px;height:22px;background:#e6e6e6"></div><div class="vl" style="left:256px;top:-7px;height:22px;background:#e6e6e6"></div><div class="vl" style="left:392px;top:-7px;height:22px;background:#e6e6e6"></div><div class="vl" style="left:593px;top:-7px;height:22px;background:#e6e6e6"></div><div class="vl" style="left:762px;top:-7px;height:22px;background:#e6e6e6"></div><div class="vl" style="left:821px;top:-7px;height:22px;background:#e6e6e6"></div><div class="vl" style="left:880px;top:-7px;height:22px;background:#e6e6e6"></div><div class="vl" style="left:952px;top:-7px;height:22px;background:#e6e6e6"></div><div class="vl" style="left:1024px;top:-7px;height:22px;background:#e6e6e6"></div><div class="cb" style="left:15px;top:-3px"></div><div class="cbc" style="left:58px;top:-3px"><svg width="13" height="13" style="position:absolute;left:0;top:0"><path d="M3 6.6L5.4 9L10 3.4" stroke="#fff" stroke-width="1.7" fill="none"/></svg></div><div class="cell num" style="left:89px;top:-5px;width:55px">СП100195</div><div class="cell num" style="left:174px;top:-5px;width:47px">21.03.24</div><div class="cell num" style="left:225px;top:-5px;width:31px">14:24</div><div class="cell " style="left:260px;top:-5px;width:132px">Магазин 10</div><div class="cell " style="left:396px;top:-5px;width:197px">Списание товара/тары по актам</div><div class="cell " style="left:597px;top:-5px;width:165px">Маркетинг</div><div class="cell num" style="left:762px;top:-5px;width:56px;text-align:right">3</div><div class="cell num" style="left:821px;top:-5px;width:56px;text-align:right">3</div><div class="cell num" style="left:880px;top:-5px;width:69px;text-align:right">4,47</div><div class="cell num" style="left:952px;top:-5px;width:69px;text-align:right">4,47</div><div class="abs" style="left:953px;top:15px;width:71px;height:21px;background:#dcfbfb"></div><div class="hl" style="left:0;top:36px;width:1224px;background:#e6e6e6"></div><div class="vl" style="left:42px;top:15px;height:22px;background:#e6e6e6"></div><div class="vl" style="left:85px;top:15px;height:22px;background:#e6e6e6"></div><div class="vl" style="left:144px;top:15px;height:22px;background:#e6e6e6"></div><div class="vl" style="left:170px;top:15px;height:22px;background:#e6e6e6"></div><div class="vl" style="left:221px;top:15px;height:22px;background:#e6e6e6"></div><div class="vl" style="left:256px;top:15px;height:22px;background:#e6e6e6"></div><div class="vl" style="left:392px;top:15px;height:22px;background:#e6e6e6"></div><div class="vl" style="left:593px;top:15px;height:22px;background:#e6e6e6"></div><div class="vl" style="left:762px;top:15px;height:22px;background:#e6e6e6"></div><div class="vl" style="left:821px;top:15px;height:22px;background:#e6e6e6"></div><div class="vl" style="left:880px;top:15px;height:22px;background:#e6e6e6"></div><div class="vl" style="left:952px;top:15px;height:22px;background:#e6e6e6"></div><div class="vl" style="left:1024px;top:15px;height:22px;background:#e6e6e6"></div><div class="cb" style="left:15px;top:19px"></div><div class="cbc" style="left:58px;top:19px"><svg width="13" height="13" style="position:absolute;left:0;top:0"><path d="M3 6.6L5.4 9L10 3.4" stroke="#fff" stroke-width="1.7" fill="none"/></svg></div><div class="cell num" style="left:89px;top:17px;width:55px">СП100007</div><div class="cell num" style="left:174px;top:17px;width:47px">21.03.24</div><div class="cell num" style="left:225px;top:17px;width:31px">14:34</div><div class="cell " style="left:260px;top:17px;width:132px">Магазин 3</div><div class="cell " style="left:396px;top:17px;width:197px">Списание товара/тары по актам</div><div class="cell " style="left:597px;top:17px;width:165px">Собственное производство</div><div class="cell num" style="left:762px;top:17px;width:56px;text-align:right">91,507</div><div class="cell num" style="left:821px;top:17px;width:56px;text-align:right">29</div><div class="cell num" style="left:880px;top:17px;width:69px;text-align:right">110,16</div><div class="cell num" style="left:952px;top:17px;width:69px;text-align:right">110,16</div><div class="abs" style="left:953px;top:37px;width:71px;height:21px;background:#dcfbfb"></div><div class="hl" style="left:0;top:58px;width:1224px;background:#e6e6e6"></div><div class="vl" style="left:42px;top:37px;height:22px;background:#e6e6e6"></div><div class="vl" style="left:85px;top:37px;height:22px;background:#e6e6e6"></div><div class="vl" style="left:144px;top:37px;height:22px;background:#e6e6e6"></div><div class="vl" style="left:170px;top:37px;height:22px;background:#e6e6e6"></div><div class="vl" style="left:221px;top:37px;height:22px;background:#e6e6e6"></div><div class="vl" style="left:256px;top:37px;height:22px;background:#e6e6e6"></div><div class="vl" style="left:392px;top:37px;height:22px;background:#e6e6e6"></div><div class="vl" style="left:593px;top:37px;height:22px;background:#e6e6e6"></div><div class="vl" style="left:762px;top:37px;height:22px;background:#e6e6e6"></div><div class="vl" style="left:821px;top:37px;height:22px;background:#e6e6e6"></div><div class="vl" style="left:880px;top:37px;height:22px;background:#e6e6e6"></div><div class="vl" style="left:952px;top:37px;height:22px;background:#e6e6e6"></div><div class="vl" style="left:1024px;top:37px;height:22px;background:#e6e6e6"></div><div class="cb" style="left:15px;top:41px"></div><div class="cbc" style="left:58px;top:41px"><svg width="13" height="13" style="position:absolute;left:0;top:0"><path d="M3 6.6L5.4 9L10 3.4" stroke="#fff" stroke-width="1.7" fill="none"/></svg></div><div class="cell num" style="left:89px;top:39px;width:55px">СП100068</div><div class="cell num" style="left:174px;top:39px;width:47px">21.03.24</div><div class="cell num" style="left:225px;top:39px;width:31px">15:15</div><div class="cell " style="left:260px;top:39px;width:132px">Магазин 8</div><div class="cell " style="left:396px;top:39px;width:197px">Списание товара/тары по актам</div><div class="cell " style="left:597px;top:39px;width:165px"></div><div class="cell num" style="left:762px;top:39px;width:56px;text-align:right">5,767</div><div class="cell num" style="left:821px;top:39px;width:56px;text-align:right">11</div><div class="cell num" style="left:880px;top:39px;width:69px;text-align:right">57,14</div><div class="cell num" style="left:952px;top:39px;width:69px;text-align:right">57,14</div><div class="abs" style="left:953px;top:59px;width:71px;height:21px;background:#dcfbfb"></div><div class="hl" style="left:0;top:80px;width:1224px;background:#e6e6e6"></div><div class="vl" style="left:42px;top:59px;height:22px;background:#e6e6e6"></div><div class="vl" style="left:85px;top:59px;height:22px;background:#e6e6e6"></div><div class="vl" style="left:144px;top:59px;height:22px;background:#e6e6e6"></div><div class="vl" style="left:170px;top:59px;height:22px;background:#e6e6e6"></div><div class="vl" style="left:221px;top:59px;height:22px;background:#e6e6e6"></div><div class="vl" style="left:256px;top:59px;height:22px;background:#e6e6e6"></div><div class="vl" style="left:392px;top:59px;height:22px;background:#e6e6e6"></div><div class="vl" style="left:593px;top:59px;height:22px;background:#e6e6e6"></div><div class="vl" style="left:762px;top:59px;height:22px;background:#e6e6e6"></div><div class="vl" style="left:821px;top:59px;height:22px;background:#e6e6e6"></div><div class="vl" style="left:880px;top:59px;height:22px;background:#e6e6e6"></div><div class="vl" style="left:952px;top:59px;height:22px;background:#e6e6e6"></div><div class="vl" style="left:1024px;top:59px;height:22px;background:#e6e6e6"></div><div class="cb" style="left:15px;top:63px"></div><div class="cbc" style="left:58px;top:63px"><svg width="13" height="13" style="position:absolute;left:0;top:0"><path d="M3 6.6L5.4 9L10 3.4" stroke="#fff" stroke-width="1.7" fill="none"/></svg></div><div class="cell num" style="left:89px;top:61px;width:55px">СП100229</div><div class="cell num" style="left:174px;top:61px;width:47px">21.03.24</div><div class="cell num" style="left:225px;top:61px;width:31px">15:23</div><div class="cell " style="left:260px;top:61px;width:132px">Магазин 3</div><div class="cell " style="left:396px;top:61px;width:197px">Списание товара/тары по актам</div><div class="cell " style="left:597px;top:61px;width:165px"></div><div class="cell num" style="left:762px;top:61px;width:56px;text-align:right">4,195</div><div class="cell num" style="left:821px;top:61px;width:56px;text-align:right">42</div><div class="cell num" style="left:880px;top:61px;width:69px;text-align:right">48,4</div><div class="cell num" style="left:952px;top:61px;width:69px;text-align:right">48,4</div><div class="abs" style="left:953px;top:81px;width:71px;height:21px;background:#dcfbfb"></div><div class="hl" style="left:0;top:102px;width:1224px;background:#e6e6e6"></div><div class="vl" style="left:42px;top:81px;height:22px;background:#e6e6e6"></div><div class="vl" style="left:85px;top:81px;height:22px;background:#e6e6e6"></div><div class="vl" style="left:144px;top:81px;height:22px;background:#e6e6e6"></div><div class="vl" style="left:170px;top:81px;height:22px;background:#e6e6e6"></div><div class="vl" style="left:221px;top:81px;height:22px;background:#e6e6e6"></div><div class="vl" style="left:256px;top:81px;height:22px;background:#e6e6e6"></div><div class="vl" style="left:392px;top:81px;height:22px;background:#e6e6e6"></div><div class="vl" style="left:593px;top:81px;height:22px;background:#e6e6e6"></div><div class="vl" style="left:762px;top:81px;height:22px;background:#e6e6e6"></div><div class="vl" style="left:821px;top:81px;height:22px;background:#e6e6e6"></div><div class="vl" style="left:880px;top:81px;height:22px;background:#e6e6e6"></div><div class="vl" style="left:952px;top:81px;height:22px;background:#e6e6e6"></div><div class="vl" style="left:1024px;top:81px;height:22px;background:#e6e6e6"></div><div class="cb" style="left:15px;top:85px"></div><div class="cbc" style="left:58px;top:85px"><svg width="13" height="13" style="position:absolute;left:0;top:0"><path d="M3 6.6L5.4 9L10 3.4" stroke="#fff" stroke-width="1.7" fill="none"/></svg></div><div class="cell num" style="left:89px;top:83px;width:55px">СП100134</div><div class="cell num" style="left:174px;top:83px;width:47px">21.03.24</div><div class="cell num" style="left:225px;top:83px;width:31px">16:00</div><div class="cell " style="left:260px;top:83px;width:132px">ЛюксСофтТрейд1</div><div class="cell " style="left:396px;top:83px;width:197px">Списание товара/тары по актам</div><div class="cell " style="left:597px;top:83px;width:165px">Собственное производство</div><div class="cell num" style="left:762px;top:83px;width:56px;text-align:right">48,174</div><div class="cell num" style="left:821px;top:83px;width:56px;text-align:right">18</div><div class="cell num" style="left:880px;top:83px;width:69px;text-align:right">186,92</div><div class="cell num" style="left:952px;top:83px;width:69px;text-align:right">186,92</div><div class="abs" style="left:953px;top:103px;width:71px;height:21px;background:#dcfbfb"></div><div class="hl" style="left:0;top:124px;width:1224px;background:#e6e6e6"></div><div class="vl" style="left:42px;top:103px;height:22px;background:#e6e6e6"></div><div class="vl" style="left:85px;top:103px;height:22px;background:#e6e6e6"></div><div class="vl" style="left:144px;top:103px;height:22px;background:#e6e6e6"></div><div class="vl" style="left:170px;top:103px;height:22px;background:#e6e6e6"></div><div class="vl" style="left:221px;top:103px;height:22px;background:#e6e6e6"></div><div class="vl" style="left:256px;top:103px;height:22px;background:#e6e6e6"></div><div class="vl" style="left:392px;top:103px;height:22px;background:#e6e6e6"></div><div class="vl" style="left:593px;top:103px;height:22px;background:#e6e6e6"></div><div class="vl" style="left:762px;top:103px;height:22px;background:#e6e6e6"></div><div class="vl" style="left:821px;top:103px;height:22px;background:#e6e6e6"></div><div class="vl" style="left:880px;top:103px;height:22px;background:#e6e6e6"></div><div class="vl" style="left:952px;top:103px;height:22px;background:#e6e6e6"></div><div class="vl" style="left:1024px;top:103px;height:22px;background:#e6e6e6"></div><div class="cb" style="left:15px;top:107px"></div><div class="cbc" style="left:58px;top:107px"><svg width="13" height="13" style="position:absolute;left:0;top:0"><path d="M3 6.6L5.4 9L10 3.4" stroke="#fff" stroke-width="1.7" fill="none"/></svg></div><div class="cell num" style="left:89px;top:105px;width:55px">СП100062</div><div class="cell num" style="left:174px;top:105px;width:47px">21.03.24</div><div class="cell num" style="left:225px;top:105px;width:31px">16:43</div><div class="cell " style="left:260px;top:105px;width:132px">Магазин 2</div><div class="cell " style="left:396px;top:105px;width:197px">Списание товара/тары по актам</div><div class="cell " style="left:597px;top:105px;width:165px"></div><div class="cell num" style="left:762px;top:105px;width:56px;text-align:right">11,3</div><div class="cell num" style="left:821px;top:105px;width:56px;text-align:right">1</div><div class="cell num" style="left:880px;top:105px;width:69px;text-align:right">13,45</div><div class="cell num" style="left:952px;top:105px;width:69px;text-align:right">13,45</div><div class="abs" style="left:953px;top:125px;width:71px;height:21px;background:#dcfbfb"></div><div class="hl" style="left:0;top:146px;width:1224px;background:#e6e6e6"></div><div class="vl" style="left:42px;top:125px;height:22px;background:#e6e6e6"></div><div class="vl" style="left:85px;top:125px;height:22px;background:#e6e6e6"></div><div class="vl" style="left:144px;top:125px;height:22px;background:#e6e6e6"></div><div class="vl" style="left:170px;top:125px;height:22px;background:#e6e6e6"></div><div class="vl" style="left:221px;top:125px;height:22px;background:#e6e6e6"></div><div class="vl" style="left:256px;top:125px;height:22px;background:#e6e6e6"></div><div class="vl" style="left:392px;top:125px;height:22px;background:#e6e6e6"></div><div class="vl" style="left:593px;top:125px;height:22px;background:#e6e6e6"></div><div class="vl" style="left:762px;top:125px;height:22px;background:#e6e6e6"></div><div class="vl" style="left:821px;top:125px;height:22px;background:#e6e6e6"></div><div class="vl" style="left:880px;top:125px;height:22px;background:#e6e6e6"></div><div class="vl" style="left:952px;top:125px;height:22px;background:#e6e6e6"></div><div class="vl" style="left:1024px;top:125px;height:22px;background:#e6e6e6"></div><div class="cb" style="left:15px;top:129px"></div><div class="cbc" style="left:58px;top:129px"><svg width="13" height="13" style="position:absolute;left:0;top:0"><path d="M3 6.6L5.4 9L10 3.4" stroke="#fff" stroke-width="1.7" fill="none"/></svg></div><div class="cell num" style="left:89px;top:127px;width:55px">СП100145</div><div class="cell num" style="left:174px;top:127px;width:47px">21.03.24</div><div class="cell num" style="left:225px;top:127px;width:31px">17:14</div><div class="cell " style="left:260px;top:127px;width:132px">Магазин 3</div><div class="cell " style="left:396px;top:127px;width:197px">Списание товара/тары по актам</div><div class="cell " style="left:597px;top:127px;width:165px">брак</div><div class="cell num" style="left:762px;top:127px;width:56px;text-align:right">18</div><div class="cell num" style="left:821px;top:127px;width:56px;text-align:right">3</div><div class="cell num" style="left:880px;top:127px;width:69px;text-align:right">57,82</div><div class="cell num" style="left:952px;top:127px;width:69px;text-align:right">57,82</div><div class="abs" style="left:953px;top:147px;width:71px;height:21px;background:#dcfbfb"></div><div class="hl" style="left:0;top:168px;width:1224px;background:#e6e6e6"></div><div class="vl" style="left:42px;top:147px;height:22px;background:#e6e6e6"></div><div class="vl" style="left:85px;top:147px;height:22px;background:#e6e6e6"></div><div class="vl" style="left:144px;top:147px;height:22px;background:#e6e6e6"></div><div class="vl" style="left:170px;top:147px;height:22px;background:#e6e6e6"></div><div class="vl" style="left:221px;top:147px;height:22px;background:#e6e6e6"></div><div class="vl" style="left:256px;top:147px;height:22px;background:#e6e6e6"></div><div class="vl" style="left:392px;top:147px;height:22px;background:#e6e6e6"></div><div class="vl" style="left:593px;top:147px;height:22px;background:#e6e6e6"></div><div class="vl" style="left:762px;top:147px;height:22px;background:#e6e6e6"></div><div class="vl" style="left:821px;top:147px;height:22px;background:#e6e6e6"></div><div class="vl" style="left:880px;top:147px;height:22px;background:#e6e6e6"></div><div class="vl" style="left:952px;top:147px;height:22px;background:#e6e6e6"></div><div class="vl" style="left:1024px;top:147px;height:22px;background:#e6e6e6"></div><div class="cb" style="left:15px;top:151px"></div><div class="cbc" style="left:58px;top:151px"><svg width="13" height="13" style="position:absolute;left:0;top:0"><path d="M3 6.6L5.4 9L10 3.4" stroke="#fff" stroke-width="1.7" fill="none"/></svg></div><div class="cell num" style="left:89px;top:149px;width:55px">СП100014</div><div class="cell num" style="left:174px;top:149px;width:47px">21.03.24</div><div class="cell num" style="left:225px;top:149px;width:31px">17:48</div><div class="cell " style="left:260px;top:149px;width:132px">Магазин 5</div><div class="cell " style="left:396px;top:149px;width:197px">Списание товара/тары по актам</div><div class="cell " style="left:597px;top:149px;width:165px">Собственное производство</div><div class="cell num" style="left:762px;top:149px;width:56px;text-align:right">43,609</div><div class="cell num" style="left:821px;top:149px;width:56px;text-align:right">17</div><div class="cell num" style="left:880px;top:149px;width:69px;text-align:right">291,53</div><div class="cell num" style="left:952px;top:149px;width:69px;text-align:right">291,53</div><div class="abs" style="left:953px;top:169px;width:71px;height:21px;background:#dcfbfb"></div><div class="hl" style="left:0;top:190px;width:1224px;background:#e6e6e6"></div><div class="vl" style="left:42px;top:169px;height:22px;background:#e6e6e6"></div><div class="vl" style="left:85px;top:169px;height:22px;background:#e6e6e6"></div><div class="vl" style="left:144px;top:169px;height:22px;background:#e6e6e6"></div><div class="vl" style="left:170px;top:169px;height:22px;background:#e6e6e6"></div><div class="vl" style="left:221px;top:169px;height:22px;background:#e6e6e6"></div><div class="vl" style="left:256px;top:169px;height:22px;background:#e6e6e6"></div><div class="vl" style="left:392px;top:169px;height:22px;background:#e6e6e6"></div><div class="vl" style="left:593px;top:169px;height:22px;background:#e6e6e6"></div><div class="vl" style="left:762px;top:169px;height:22px;background:#e6e6e6"></div><div class="vl" style="left:821px;top:169px;height:22px;background:#e6e6e6"></div><div class="vl" style="left:880px;top:169px;height:22px;background:#e6e6e6"></div><div class="vl" style="left:952px;top:169px;height:22px;background:#e6e6e6"></div><div class="vl" style="left:1024px;top:169px;height:22px;background:#e6e6e6"></div><div class="cb" style="left:15px;top:173px"></div><div class="cbc" style="left:58px;top:173px"><svg width="13" height="13" style="position:absolute;left:0;top:0"><path d="M3 6.6L5.4 9L10 3.4" stroke="#fff" stroke-width="1.7" fill="none"/></svg></div><div class="cell num" style="left:89px;top:171px;width:55px">СП100159</div><div class="cell num" style="left:174px;top:171px;width:47px">21.03.24</div><div class="cell num" style="left:225px;top:171px;width:31px">18:18</div><div class="cell " style="left:260px;top:171px;width:132px">Магазин 3</div><div class="cell " style="left:396px;top:171px;width:197px">Списание товара/тары по актам</div><div class="cell " style="left:597px;top:171px;width:165px"></div><div class="cell num" style="left:762px;top:171px;width:56px;text-align:right">3</div><div class="cell num" style="left:821px;top:171px;width:56px;text-align:right">1</div><div class="cell num" style="left:880px;top:171px;width:69px;text-align:right">20,97</div><div class="cell num" style="left:952px;top:171px;width:69px;text-align:right">20,97</div><div class="abs" style="left:953px;top:191px;width:71px;height:21px;background:#dcfbfb"></div><div class="hl" style="left:0;top:212px;width:1224px;background:#e6e6e6"></div><div class="vl" style="left:42px;top:191px;height:22px;background:#e6e6e6"></div><div class="vl" style="left:85px;top:191px;height:22px;background:#e6e6e6"></div><div class="vl" style="left:144px;top:191px;height:22px;background:#e6e6e6"></div><div class="vl" style="left:170px;top:191px;height:22px;background:#e6e6e6"></div><div class="vl" style="left:221px;top:191px;height:22px;background:#e6e6e6"></div><div class="vl" style="left:256px;top:191px;height:22px;background:#e6e6e6"></div><div class="vl" style="left:392px;top:191px;height:22px;background:#e6e6e6"></div><div class="vl" style="left:593px;top:191px;height:22px;background:#e6e6e6"></div><div class="vl" style="left:762px;top:191px;height:22px;background:#e6e6e6"></div><div class="vl" style="left:821px;top:191px;height:22px;background:#e6e6e6"></div><div class="vl" style="left:880px;top:191px;height:22px;background:#e6e6e6"></div><div class="vl" style="left:952px;top:191px;height:22px;background:#e6e6e6"></div><div class="vl" style="left:1024px;top:191px;height:22px;background:#e6e6e6"></div><div class="cb" style="left:15px;top:195px"></div><div class="cbc" style="left:58px;top:195px"><svg width="13" height="13" style="position:absolute;left:0;top:0"><path d="M3 6.6L5.4 9L10 3.4" stroke="#fff" stroke-width="1.7" fill="none"/></svg></div><div class="cell num" style="left:89px;top:193px;width:55px">СП100106</div><div class="cell num" style="left:174px;top:193px;width:47px">21.03.24</div><div class="cell num" style="left:225px;top:193px;width:31px">19:17</div><div class="cell " style="left:260px;top:193px;width:132px">Магазин 3</div><div class="cell " style="left:396px;top:193px;width:197px">Списание товара/тары по актам</div><div class="cell " style="left:597px;top:193px;width:165px"></div><div class="cell num" style="left:762px;top:193px;width:56px;text-align:right">25,21</div><div class="cell num" style="left:821px;top:193px;width:56px;text-align:right">6</div><div class="cell num" style="left:880px;top:193px;width:69px;text-align:right">55,05</div><div class="cell num" style="left:952px;top:193px;width:69px;text-align:right">55,05</div><div class="abs" style="left:953px;top:213px;width:71px;height:21px;background:#dcfbfb"></div><div class="hl" style="left:0;top:234px;width:1224px;background:#e6e6e6"></div><div class="vl" style="left:42px;top:213px;height:22px;background:#e6e6e6"></div><div class="vl" style="left:85px;top:213px;height:22px;background:#e6e6e6"></div><div class="vl" style="left:144px;top:213px;height:22px;background:#e6e6e6"></div><div class="vl" style="left:170px;top:213px;height:22px;background:#e6e6e6"></div><div class="vl" style="left:221px;top:213px;height:22px;background:#e6e6e6"></div><div class="vl" style="left:256px;top:213px;height:22px;background:#e6e6e6"></div><div class="vl" style="left:392px;top:213px;height:22px;background:#e6e6e6"></div><div class="vl" style="left:593px;top:213px;height:22px;background:#e6e6e6"></div><div class="vl" style="left:762px;top:213px;height:22px;background:#e6e6e6"></div><div class="vl" style="left:821px;top:213px;height:22px;background:#e6e6e6"></div><div class="vl" style="left:880px;top:213px;height:22px;background:#e6e6e6"></div><div class="vl" style="left:952px;top:213px;height:22px;background:#e6e6e6"></div><div class="vl" style="left:1024px;top:213px;height:22px;background:#e6e6e6"></div><div class="cb" style="left:15px;top:217px"></div><div class="cbc" style="left:58px;top:217px"><svg width="13" height="13" style="position:absolute;left:0;top:0"><path d="M3 6.6L5.4 9L10 3.4" stroke="#fff" stroke-width="1.7" fill="none"/></svg></div><div class="cell num" style="left:89px;top:215px;width:55px">СП100177</div><div class="cell num" style="left:174px;top:215px;width:47px">21.03.24</div><div class="cell num" style="left:225px;top:215px;width:31px">19:23</div><div class="cell " style="left:260px;top:215px;width:132px">Магазин 3</div><div class="cell " style="left:396px;top:215px;width:197px">Списание товара/тары по актам</div><div class="cell " style="left:597px;top:215px;width:165px"></div><div class="cell num" style="left:762px;top:215px;width:56px;text-align:right">16,4</div><div class="cell num" style="left:821px;top:215px;width:56px;text-align:right">9</div><div class="cell num" style="left:880px;top:215px;width:69px;text-align:right">59,12</div><div class="cell num" style="left:952px;top:215px;width:69px;text-align:right">59,12</div><div class="abs" style="left:953px;top:235px;width:71px;height:21px;background:#dcfbfb"></div><div class="hl" style="left:0;top:256px;width:1224px;background:#e6e6e6"></div><div class="vl" style="left:42px;top:235px;height:22px;background:#e6e6e6"></div><div class="vl" style="left:85px;top:235px;height:22px;background:#e6e6e6"></div><div class="vl" style="left:144px;top:235px;height:22px;background:#e6e6e6"></div><div class="vl" style="left:170px;top:235px;height:22px;background:#e6e6e6"></div><div class="vl" style="left:221px;top:235px;height:22px;background:#e6e6e6"></div><div class="vl" style="left:256px;top:235px;height:22px;background:#e6e6e6"></div><div class="vl" style="left:392px;top:235px;height:22px;background:#e6e6e6"></div><div class="vl" style="left:593px;top:235px;height:22px;background:#e6e6e6"></div><div class="vl" style="left:762px;top:235px;height:22px;background:#e6e6e6"></div><div class="vl" style="left:821px;top:235px;height:22px;background:#e6e6e6"></div><div class="vl" style="left:880px;top:235px;height:22px;background:#e6e6e6"></div><div class="vl" style="left:952px;top:235px;height:22px;background:#e6e6e6"></div><div class="vl" style="left:1024px;top:235px;height:22px;background:#e6e6e6"></div><div class="cb" style="left:15px;top:239px"></div><div class="cbc" style="left:58px;top:239px"><svg width="13" height="13" style="position:absolute;left:0;top:0"><path d="M3 6.6L5.4 9L10 3.4" stroke="#fff" stroke-width="1.7" fill="none"/></svg></div><div class="cell num" style="left:89px;top:237px;width:55px">СП100110</div><div class="cell num" style="left:174px;top:237px;width:47px">21.03.24</div><div class="cell num" style="left:225px;top:237px;width:31px">19:27</div><div class="cell " style="left:260px;top:237px;width:132px">Магазин 3</div><div class="cell " style="left:396px;top:237px;width:197px">Списание товара/тары по актам</div><div class="cell " style="left:597px;top:237px;width:165px"></div><div class="cell num" style="left:762px;top:237px;width:56px;text-align:right">28,962</div><div class="cell num" style="left:821px;top:237px;width:56px;text-align:right">14</div><div class="cell num" style="left:880px;top:237px;width:69px;text-align:right">135,34</div><div class="cell num" style="left:952px;top:237px;width:69px;text-align:right">135,34</div><div class="abs" style="left:0;top:256px;width:1224px;height:22px;background:#d3e3e8"></div><div class="abs" style="left:953px;top:256px;width:71px;height:22px;background:#c6e3e5"></div><div class="vl" style="left:42px;top:257px;height:22px;background:#e6e6e6"></div><div class="vl" style="left:85px;top:257px;height:22px;background:#e6e6e6"></div><div class="vl" style="left:144px;top:257px;height:22px;background:#e6e6e6"></div><div class="vl" style="left:170px;top:257px;height:22px;background:#e6e6e6"></div><div class="vl" style="left:221px;top:257px;height:22px;background:#e6e6e6"></div><div class="vl" style="left:256px;top:257px;height:22px;background:#e6e6e6"></div><div class="vl" style="left:392px;top:257px;height:22px;background:#e6e6e6"></div><div class="vl" style="left:593px;top:257px;height:22px;background:#e6e6e6"></div><div class="vl" style="left:762px;top:257px;height:22px;background:#e6e6e6"></div><div class="vl" style="left:821px;top:257px;height:22px;background:#e6e6e6"></div><div class="vl" style="left:880px;top:257px;height:22px;background:#e6e6e6"></div><div class="vl" style="left:952px;top:257px;height:22px;background:#e6e6e6"></div><div class="vl" style="left:1024px;top:257px;height:22px;background:#e6e6e6"></div><div class="cb" style="left:15px;top:261px"></div><div class="cbc" style="left:58px;top:261px"><svg width="13" height="13" style="position:absolute;left:0;top:0"><path d="M3 6.6L5.4 9L10 3.4" stroke="#fff" stroke-width="1.7" fill="none"/></svg></div><div class="cell num" style="left:89px;top:259px;width:55px">СП100141</div><div class="cell num" style="left:174px;top:259px;width:47px">19.03.24</div><div class="cell num" style="left:225px;top:259px;width:31px">10:58</div><div class="cell " style="left:260px;top:259px;width:132px">Магазин 9</div><div class="cell " style="left:396px;top:259px;width:197px">Списание товара/тары по актам</div><div class="cell " style="left:597px;top:259px;width:165px"></div><div class="cell num" style="left:762px;top:259px;width:56px;text-align:right">75,994</div><div class="cell num" style="left:821px;top:259px;width:56px;text-align:right">38</div><div class="cell num" style="left:880px;top:259px;width:69px;text-align:right">308,75</div><div class="cell num" style="left:952px;top:259px;width:69px;text-align:right">308,75</div><div class="abs" style="left:256px;top:256px;width:137px;height:22px;border:1px solid #1b87bf;border-radius:2px"></div></div><div class="abs" style="left:1544px;top:419px;width:8px;height:52px;background:#d9d9d9"></div><div class="abs" style="left:320px;top:510px;width:1106px;height:9px;background:#d9d9d9"></div><svg class="abs" style="left:0;top:0" width="620" height="949"><rect x="319" y="524" width="28" height="22" rx="4" fill="#d3e3e8"/><circle cx="326.8" cy="530" r="1.7" stroke="#41bdf0" stroke-width="1.2" fill="none"/><path d="M331.5 530.5H340.8" stroke="#252525" stroke-width="1.3"/><circle cx="326.8" cy="535" r="1.7" stroke="#41bdf0" stroke-width="1.2" fill="none"/><path d="M331.5 535.5H340.8" stroke="#252525" stroke-width="1.3"/><circle cx="326.8" cy="540" r="1.7" stroke="#41bdf0" stroke-width="1.2" fill="none"/><path d="M331.5 540.5H340.8" stroke="#252525" stroke-width="1.3"/><rect x="353.6" y="527.6" width="15" height="14.6" rx="1" stroke="#252525" stroke-width="1.3" fill="#fff"/><path d="M358.6 528V542M363.6 528V542M354 532.5H368M354 537.5H368" stroke="#41bdf0" stroke-width="1.2"/><rect x="381.6" y="529" width="14.8" height="13.4" rx="1.5" stroke="#252525" stroke-width="1.3" fill="#fff"/><path d="M381.6 532.3H396.4M385.5 527.3V529.5M392.5 527.3V529.5" stroke="#252525" stroke-width="1.2"/><path d="M384 537.6H394M386.5 535V540.3M391.5 535V540.3" stroke="#41bdf0" stroke-width="1.2"/><path d="M413.5 529.3H428.8M417.8 537.5H424.5" stroke="#252525" stroke-width="1.2"/><path d="M415.8 533.5H426.5M419.7 541.5H422.7" stroke="#41bdf0" stroke-width="1.2"/><path d="M450.26 530.25L450.83 527.77L454.77 527.77L455.34 530.25L455.56 530.37L457.99 529.62L459.96 533.04L458.10 534.77L458.10 535.03L459.96 536.76L457.99 540.18L455.56 539.43L455.34 539.55L454.77 542.03L450.83 542.03L450.26 539.55L450.04 539.43L447.61 540.18L445.64 536.76L447.50 535.03L447.50 534.77L445.64 533.04L447.61 529.62L450.04 530.37Z" stroke="#252525" stroke-width="1.2" fill="none" stroke-linejoin="round"/><circle cx="452.8" cy="534.9" r="2.3" stroke="#41bdf0" stroke-width="1.3" fill="none"/><path d="M483.6 529.3H492.8" stroke="#252525" stroke-width="1.3"/><text x="476.8" y="532.0999999999999" font-family="Liberation Sans" font-size="6.5" font-weight="bold" fill="#41bdf0">1</text><path d="M483.6 535.5H492.8" stroke="#252525" stroke-width="1.3"/><text x="476.8" y="538.3" font-family="Liberation Sans" font-size="6.5" font-weight="bold" fill="#41bdf0">2</text><path d="M483.6 541.4H492.8" stroke="#252525" stroke-width="1.3"/><text x="476.8" y="544.1999999999999" font-family="Liberation Sans" font-size="6.5" font-weight="bold" fill="#41bdf0">3</text><path d="M505.5 528.3H520.8M505.5 532.4H520.8M505.5 536.6H511.5M505.5 540.5H511.5" stroke="#252525" stroke-width="1.2"/><path d="M514.2 538.5H520.8M517.5 535.2V541.8" stroke="#41bdf0" stroke-width="1.2"/><path d="M542 530.8H538.5Q537.6 530.8 537.6 531.7V541.3Q537.6 542.3 538.5 542.3H548.8Q549.7 542.3 549.7 541.3V538" stroke="#252525" stroke-width="1.3" fill="none"/><path d="M544.5 535.5L552.3 527.7M548 527.7H552.3V532" stroke="#41bdf0" stroke-width="1.3" fill="none"/><path d="M572 539.5H569.6V530H579.3M576.5 527.2L579.3 530L576.5 532.8" stroke="#252525" stroke-width="1.3" fill="none"/><path d="M582 530H584.5V539.5H574.8M577.6 536.7L574.8 539.5L577.6 542.3" stroke="#41bdf0" stroke-width="1.3" fill="none"/></svg><svg class="abs" style="left:0;top:0" width="620" height="949"><rect x="319" y="921" width="28" height="22" rx="4" fill="#d3e3e8"/><circle cx="326.8" cy="927" r="1.7" stroke="#41bdf0" stroke-width="1.2" fill="none"/><path d="M331.5 927.5H340.8" stroke="#252525" stroke-width="1.3"/><circle cx="326.8" cy="932" r="1.7" stroke="#41bdf0" stroke-width="1.2" fill="none"/><path d="M331.5 932.5H340.8" stroke="#252525" stroke-width="1.3"/><circle cx="326.8" cy="937" r="1.7" stroke="#41bdf0" stroke-width="1.2" fill="none"/><path d="M331.5 937.5H340.8" stroke="#252525" stroke-width="1.3"/><rect x="353.6" y="924.6" width="15" height="14.6" rx="1" stroke="#252525" stroke-width="1.3" fill="#fff"/><path d="M358.6 925V939M363.6 925V939M354 929.5H368M354 934.5H368" stroke="#41bdf0" stroke-width="1.2"/><path d="M385.5 926.3H400.8M389.8 934.5H396.5" stroke="#252525" stroke-width="1.2"/><path d="M387.8 930.5H398.5M391.7 938.5H394.7" stroke="#41bdf0" stroke-width="1.2"/><path d="M422.26 927.25L422.83 924.77L426.77 924.77L427.34 927.25L427.56 927.37L429.99 926.62L431.96 930.04L430.10 931.77L430.10 932.03L431.96 933.76L429.99 937.18L427.56 936.43L427.34 936.55L426.77 939.03L422.83 939.03L422.26 936.55L422.04 936.43L419.61 937.18L417.64 933.76L419.50 932.03L419.50 931.77L417.64 930.04L419.61 926.62L422.04 927.37Z" stroke="#252525" stroke-width="1.2" fill="none" stroke-linejoin="round"/><circle cx="424.8" cy="931.9" r="2.3" stroke="#41bdf0" stroke-width="1.3" fill="none"/><path d="M455.6 926.3H464.8" stroke="#252525" stroke-width="1.3"/><text x="448.8" y="929.0999999999999" font-family="Liberation Sans" font-size="6.5" font-weight="bold" fill="#41bdf0">1</text><path d="M455.6 932.5H464.8" stroke="#252525" stroke-width="1.3"/><text x="448.8" y="935.3" font-family="Liberation Sans" font-size="6.5" font-weight="bold" fill="#41bdf0">2</text><path d="M455.6 938.4H464.8" stroke="#252525" stroke-width="1.3"/><text x="448.8" y="941.1999999999999" font-family="Liberation Sans" font-size="6.5" font-weight="bold" fill="#41bdf0">3</text><path d="M477.5 925.3H492.79999999999995M477.5 929.4H492.79999999999995M477.5 933.6H483.5M477.5 937.5H483.5" stroke="#252525" stroke-width="1.2"/><path d="M486.20000000000005 935.5H492.79999999999995M489.5 932.2V938.8" stroke="#41bdf0" stroke-width="1.2"/><path d="M514 927.8H510.5Q509.6 927.8 509.6 928.7V938.3Q509.6 939.3 510.5 939.3H520.8Q521.7 939.3 521.7 938.3V935" stroke="#252525" stroke-width="1.3" fill="none"/><path d="M516.5 932.5L524.3 924.7M520 924.7H524.3V929" stroke="#41bdf0" stroke-width="1.3" fill="none"/><path d="M544 936.5H541.6V927H551.3M548.5 924.2L551.3 927L548.5 929.8" stroke="#252525" stroke-width="1.3" fill="none"/><path d="M554 927H556.5V936.5H546.8M549.6 933.7L546.8 936.5L549.6 939.3" stroke="#41bdf0" stroke-width="1.3" fill="none"/></svg><div class="cbc" style="left:859px;top:528px"><svg width="13" height="13" style="position:absolute;left:0;top:0"><path d="M3 6.6L5.4 9L10 3.4" stroke="#fff" stroke-width="1.7" fill="none"/></svg></div><div class="t" style="left:874.6px;top:529px;font-size:12px;letter-spacing:-0.2px">Открыт (F6)</div><div class="btn" style="left:942px;top:524px;width:75px"></div><div class="t" style="left:957.2px;top:528px;font-size:12px;color:#222;letter-spacing:0px">Закрыть</div><div class="btn" style="left:1021px;top:524px;width:100px"></div><div class="t" style="left:1053.8px;top:528px;font-size:12px;color:#222;letter-spacing:0px">Добавить</div><div class="btn" style="left:1126px;top:524px;width:129px"></div><div class="t" style="left:1158.7px;top:528px;font-size:12px;color:#222;letter-spacing:0px">Редактировать</div><div class="btn" style="left:1259px;top:524px;width:91px"></div><div class="t" style="left:1291.7px;top:528px;font-size:12px;color:#222;letter-spacing:0px">Удалить</div><div class="btn" style="left:1354px;top:524px;width:199px"></div><div class="t" style="left:1369px;top:528px;font-size:12px;color:#222;letter-spacing:-0.15px">Создать список SKU на основе</div><div class="abs" style="left:1019px;top:521px;width:104px;height:28px;border:2px solid #e3141c"></div><svg class="abs" style="left:0;top:0" width="1560" height="560"><path d="M1036.8 535.5H1047M1041.9 530.4V540.6" stroke="#333" stroke-width="1.4"/><path d="M1141.5 541L1142.2 538L1149.5 530.7L1152 533.2L1144.7 540.5Z" stroke="#333" stroke-width="1.1" fill="none" stroke-linejoin="round"/><path d="M1140.5 543.3H1153" stroke="#41bdf0" stroke-width="1.1"/><path d="M1275 535.5H1285" stroke="#555" stroke-width="1.6"/><path d="M985.8 449.8L1045 505.5" stroke="#e8192b" stroke-width="2.2" stroke-linecap="round"/><path d="M1053.6 513.5L1037.6 508.3L1047.6 497.8Z" fill="#e8192b"/></svg><div class="hl" style="left:317px;top:571px;width:1238px;background:#d0d0d0"></div><div class="abs" style="left:320px;top:551px;width:105px;height:20px;background:#d3e3e8;border:1px solid #d3d3d3;border-bottom:none;border-radius:4px 4px 0 0"></div><div class="t" style="left:331.4px;top:554px;font-size:12px;letter-spacing:-0.15px;color:#333">Спецификация</div><div class="abs" style="left:428px;top:551px;width:68px;height:20px;background:#f2f2f2;border:1px solid #d3d3d3;border-bottom:none;border-radius:4px 4px 0 0"></div><div class="t" style="left:439px;top:554px;font-size:12px;letter-spacing:-0.15px;color:#333">История</div><div class="abs" style="left:500px;top:551px;width:118px;height:20px;background:#f2f2f2;border:1px solid #d3d3d3;border-bottom:none;border-radius:4px 4px 0 0"></div><div class="t" style="left:510.5px;top:554px;font-size:12px;letter-spacing:-0.15px;color:#333">Печатные формы</div><div class="abs" style="left:319px;top:576px;width:1234px;height:343px;background:#fff;border:1px solid #cfcfcf;border-radius:3px"></div><div class="abs" style="left:320px;top:577px;width:1224px;height:54px;background:#f2f2f2;border-top-left-radius:2px"></div><div class="vl" style="left:378px;top:577px;height:333px;background:#e6e6e6"></div><div class="vl" style="left:482px;top:577px;height:333px;background:#e6e6e6"></div><div class="vl" style="left:554px;top:577px;height:333px;background:#e6e6e6"></div><div class="vl" style="left:755px;top:577px;height:333px;background:#e6e6e6"></div><div class="vl" style="left:781px;top:577px;height:333px;background:#e6e6e6"></div><div class="vl" style="left:917px;top:577px;height:333px;background:#e6e6e6"></div><div class="vl" style="left:969px;top:577px;height:333px;background:#e6e6e6"></div><div class="vl" style="left:1021px;top:577px;height:333px;background:#e6e6e6"></div><div class="vl" style="left:1086px;top:577px;height:333px;background:#e6e6e6"></div><div class="vl" style="left:1158px;top:577px;height:333px;background:#e6e6e6"></div><div class="vl" style="left:1210px;top:577px;height:333px;background:#e6e6e6"></div><div class="vl" style="left:1411px;top:577px;height:333px;background:#e6e6e6"></div><div class="vl" style="left:1463px;top:577px;height:333px;background:#e6e6e6"></div><div class="vl" style="left:1528px;top:577px;height:333px;background:#e6e6e6"></div><div class="t" style="left:320px;top:588.7px;width:58px;text-align:center;color:#333;font-size:12px;overflow:hidden">Номер<br>строки</div><div class="t" style="left:379px;top:596.7px;width:103px;text-align:center;color:#333;font-size:12px;overflow:hidden">Штрихкод</div><div class="t" style="left:483px;top:596.7px;width:71px;text-align:center;color:#333;font-size:12px;overflow:hidden">Код</div><div class="t" style="left:555px;top:596.7px;width:200px;text-align:center;color:#333;font-size:12px;overflow:hidden">Наименование</div><div class="t" style="left:756px;top:580.7px;width:25px;text-align:center;color:#333;font-size:12px;overflow:hidden">Ед.<br>изм<br>.</div><div class="t" style="left:782px;top:596.7px;width:135px;text-align:center;color:#333;font-size:12px;overflow:hidden">Партия</div><div class="t" style="left:918px;top:596.7px;width:51px;text-align:center;color:#333;font-size:12px;overflow:hidden">Кол-во</div><div class="t" style="left:970px;top:596.7px;width:51px;text-align:center;color:#333;font-size:12px;overflow:hidden">Цена</div><div class="t" style="left:1022px;top:596.7px;width:64px;text-align:center;color:#333;font-size:12px;overflow:hidden">Сумма</div><div class="t" style="left:1087px;top:596.7px;width:71px;text-align:center;color:#333;font-size:12px;overflow:hidden">Склад</div><div class="t" style="left:1159px;top:596.7px;width:51px;text-align:center;color:#333;font-size:12px;overflow:hidden">Резерв</div><div class="t" style="left:1211px;top:596.7px;width:200px;text-align:center;color:#333;font-size:12px;overflow:hidden">Строка поставки</div><div class="t" style="left:1412px;top:580.7px;width:51px;text-align:center;color:#333;font-size:12px;overflow:hidden">Цена<br>поставщ<br>ика</div><div class="t" style="left:1464px;top:580.7px;width:64px;text-align:center;color:#333;font-size:12px;overflow:hidden">Сумма<br>поставщик<br>а</div><div class="t" style="left:1532px;top:588.7px;width:12px;color:#333;font-size:12px;overflow:hidden">На</div><div class="abs" style="left:320px;top:631px;width:1224px;height:279px;overflow:hidden"><div class="abs" style="left:0;top:0px;width:1224px;height:21px;background:#d3e3e8"></div><div class="abs" style="left:1092px;top:0px;width:132px;height:21px;background:#c6e3e5"></div><div class="hl" style="left:0;top:21px;width:1224px;background:#e6e6e6"></div><div class="vl" style="left:58px;top:0px;height:21px;background:#e6e6e6"></div><div class="vl" style="left:162px;top:0px;height:21px;background:#e6e6e6"></div><div class="vl" style="left:234px;top:0px;height:21px;background:#e6e6e6"></div><div class="vl" style="left:435px;top:0px;height:21px;background:#e6e6e6"></div><div class="vl" style="left:461px;top:0px;height:21px;background:#e6e6e6"></div><div class="vl" style="left:597px;top:0px;height:21px;background:#e6e6e6"></div><div class="vl" style="left:649px;top:0px;height:21px;background:#e6e6e6"></div><div class="vl" style="left:701px;top:0px;height:21px;background:#e6e6e6"></div><div class="vl" style="left:766px;top:0px;height:21px;background:#e6e6e6"></div><div class="vl" style="left:838px;top:0px;height:21px;background:#e6e6e6"></div><div class="vl" style="left:890px;top:0px;height:21px;background:#e6e6e6"></div><div class="vl" style="left:1091px;top:0px;height:21px;background:#e6e6e6"></div><div class="vl" style="left:1143px;top:0px;height:21px;background:#e6e6e6"></div><div class="vl" style="left:1208px;top:0px;height:21px;background:#e6e6e6"></div><div class="cell num" style="left:-1px;top:2px;width:55.5px;text-align:right">1</div><div class="cell num" style="left:62px;top:2px;width:100px">66003</div><div class="cell num" style="left:166px;top:2px;width:68px">14</div><div class="cell nm" style="left:238px;top:2px;width:197px">АВОКАДО 1КГ</div><div class="cell " style="left:439px;top:2px;width:22px">л</div><div class="cell num" style="left:597px;top:2px;width:48.5px;text-align:right">0,83</div><div class="cell num" style="left:649px;top:2px;width:48.5px;text-align:right">12,99</div><div class="cell num" style="left:701px;top:2px;width:61.5px;text-align:right">10,78</div><div class="cell " style="left:770px;top:2px;width:68px">Магазин 9</div><div class="cell num" style="left:1091px;top:2px;width:48.5px;text-align:right">8,4</div><div class="cell num" style="left:1143px;top:2px;width:61.5px;text-align:right">6,97</div><div class="abs" style="left:1092px;top:21px;width:132px;height:21px;background:#dcfbfb"></div><div class="hl" style="left:0;top:42px;width:1224px;background:#e6e6e6"></div><div class="vl" style="left:58px;top:21px;height:21px;background:#e6e6e6"></div><div class="vl" style="left:162px;top:21px;height:21px;background:#e6e6e6"></div><div class="vl" style="left:234px;top:21px;height:21px;background:#e6e6e6"></div><div class="vl" style="left:435px;top:21px;height:21px;background:#e6e6e6"></div><div class="vl" style="left:461px;top:21px;height:21px;background:#e6e6e6"></div><div class="vl" style="left:597px;top:21px;height:21px;background:#e6e6e6"></div><div class="vl" style="left:649px;top:21px;height:21px;background:#e6e6e6"></div><div class="vl" style="left:701px;top:21px;height:21px;background:#e6e6e6"></div><div class="vl" style="left:766px;top:21px;height:21px;background:#e6e6e6"></div><div class="vl" style="left:838px;top:21px;height:21px;background:#e6e6e6"></div><div class="vl" style="left:890px;top:21px;height:21px;background:#e6e6e6"></div><div class="vl" style="left:1091px;top:21px;height:21px;background:#e6e6e6"></div><div class="vl" style="left:1143px;top:21px;height:21px;background:#e6e6e6"></div><div class="vl" style="left:1208px;top:21px;height:21px;background:#e6e6e6"></div><div class="cell num" style="left:-1px;top:23px;width:55.5px;text-align:right">2</div><div class="cell num" style="left:62px;top:23px;width:100px">66729</div><div class="cell num" style="left:166px;top:23px;width:68px">225</div><div class="cell nm" style="left:238px;top:23px;width:197px">АПЕЛЬСИН 1КГ</div><div class="cell " style="left:439px;top:23px;width:22px">л</div><div class="cell num" style="left:597px;top:23px;width:48.5px;text-align:right">1,23</div><div class="cell num" style="left:649px;top:23px;width:48.5px;text-align:right">1,49</div><div class="cell num" style="left:701px;top:23px;width:61.5px;text-align:right">1,83</div><div class="cell " style="left:770px;top:23px;width:68px">Магазин 9</div><div class="cell num" style="left:1091px;top:23px;width:48.5px;text-align:right">1,1</div><div class="cell num" style="left:1143px;top:23px;width:61.5px;text-align:right">1,35</div><div class="abs" style="left:1092px;top:42px;width:132px;height:21px;background:#dcfbfb"></div><div class="hl" style="left:0;top:63px;width:1224px;background:#e6e6e6"></div><div class="vl" style="left:58px;top:42px;height:21px;background:#e6e6e6"></div><div class="vl" style="left:162px;top:42px;height:21px;background:#e6e6e6"></div><div class="vl" style="left:234px;top:42px;height:21px;background:#e6e6e6"></div><div class="vl" style="left:435px;top:42px;height:21px;background:#e6e6e6"></div><div class="vl" style="left:461px;top:42px;height:21px;background:#e6e6e6"></div><div class="vl" style="left:597px;top:42px;height:21px;background:#e6e6e6"></div><div class="vl" style="left:649px;top:42px;height:21px;background:#e6e6e6"></div><div class="vl" style="left:701px;top:42px;height:21px;background:#e6e6e6"></div><div class="vl" style="left:766px;top:42px;height:21px;background:#e6e6e6"></div><div class="vl" style="left:838px;top:42px;height:21px;background:#e6e6e6"></div><div class="vl" style="left:890px;top:42px;height:21px;background:#e6e6e6"></div><div class="vl" style="left:1091px;top:42px;height:21px;background:#e6e6e6"></div><div class="vl" style="left:1143px;top:42px;height:21px;background:#e6e6e6"></div><div class="vl" style="left:1208px;top:42px;height:21px;background:#e6e6e6"></div><div class="cell num" style="left:-1px;top:44px;width:55.5px;text-align:right">3</div><div class="cell num" style="left:62px;top:44px;width:100px">63082</div><div class="cell num" style="left:166px;top:44px;width:68px">457</div><div class="cell nm" style="left:238px;top:44px;width:197px">БАКЛАЖАН 1КГ</div><div class="cell " style="left:439px;top:44px;width:22px">л</div><div class="cell num" style="left:597px;top:44px;width:48.5px;text-align:right">2,34</div><div class="cell num" style="left:649px;top:44px;width:48.5px;text-align:right">5,49</div><div class="cell num" style="left:701px;top:44px;width:61.5px;text-align:right">12,85</div><div class="cell " style="left:770px;top:44px;width:68px">Магазин 9</div><div class="cell num" style="left:1091px;top:44px;width:48.5px;text-align:right">3,5</div><div class="cell num" style="left:1143px;top:44px;width:61.5px;text-align:right">8,19</div><div class="abs" style="left:1092px;top:63px;width:132px;height:21px;background:#dcfbfb"></div><div class="hl" style="left:0;top:84px;width:1224px;background:#e6e6e6"></div><div class="vl" style="left:58px;top:63px;height:21px;background:#e6e6e6"></div><div class="vl" style="left:162px;top:63px;height:21px;background:#e6e6e6"></div><div class="vl" style="left:234px;top:63px;height:21px;background:#e6e6e6"></div><div class="vl" style="left:435px;top:63px;height:21px;background:#e6e6e6"></div><div class="vl" style="left:461px;top:63px;height:21px;background:#e6e6e6"></div><div class="vl" style="left:597px;top:63px;height:21px;background:#e6e6e6"></div><div class="vl" style="left:649px;top:63px;height:21px;background:#e6e6e6"></div><div class="vl" style="left:701px;top:63px;height:21px;background:#e6e6e6"></div><div class="vl" style="left:766px;top:63px;height:21px;background:#e6e6e6"></div><div class="vl" style="left:838px;top:63px;height:21px;background:#e6e6e6"></div><div class="vl" style="left:890px;top:63px;height:21px;background:#e6e6e6"></div><div class="vl" style="left:1091px;top:63px;height:21px;background:#e6e6e6"></div><div class="vl" style="left:1143px;top:63px;height:21px;background:#e6e6e6"></div><div class="vl" style="left:1208px;top:63px;height:21px;background:#e6e6e6"></div><div class="cell num" style="left:-1px;top:65px;width:55.5px;text-align:right">4</div><div class="cell num" style="left:62px;top:65px;width:100px">66755</div><div class="cell num" style="left:166px;top:65px;width:68px">2484</div><div class="cell nm" style="left:238px;top:65px;width:197px">ВИНОГРАД РЕД ГЛОБ 1КГ</div><div class="cell " style="left:439px;top:65px;width:22px">л</div><div class="cell num" style="left:597px;top:65px;width:48.5px;text-align:right">1,85</div><div class="cell num" style="left:649px;top:65px;width:48.5px;text-align:right">5,99</div><div class="cell num" style="left:701px;top:65px;width:61.5px;text-align:right">11,08</div><div class="cell " style="left:770px;top:65px;width:68px">Магазин 9</div><div class="cell num" style="left:1091px;top:65px;width:48.5px;text-align:right">4,42</div><div class="cell num" style="left:1143px;top:65px;width:61.5px;text-align:right">8,18</div><div class="abs" style="left:1092px;top:84px;width:132px;height:21px;background:#dcfbfb"></div><div class="hl" style="left:0;top:105px;width:1224px;background:#e6e6e6"></div><div class="vl" style="left:58px;top:84px;height:21px;background:#e6e6e6"></div><div class="vl" style="left:162px;top:84px;height:21px;background:#e6e6e6"></div><div class="vl" style="left:234px;top:84px;height:21px;background:#e6e6e6"></div><div class="vl" style="left:435px;top:84px;height:21px;background:#e6e6e6"></div><div class="vl" style="left:461px;top:84px;height:21px;background:#e6e6e6"></div><div class="vl" style="left:597px;top:84px;height:21px;background:#e6e6e6"></div><div class="vl" style="left:649px;top:84px;height:21px;background:#e6e6e6"></div><div class="vl" style="left:701px;top:84px;height:21px;background:#e6e6e6"></div><div class="vl" style="left:766px;top:84px;height:21px;background:#e6e6e6"></div><div class="vl" style="left:838px;top:84px;height:21px;background:#e6e6e6"></div><div class="vl" style="left:890px;top:84px;height:21px;background:#e6e6e6"></div><div class="vl" style="left:1091px;top:84px;height:21px;background:#e6e6e6"></div><div class="vl" style="left:1143px;top:84px;height:21px;background:#e6e6e6"></div><div class="vl" style="left:1208px;top:84px;height:21px;background:#e6e6e6"></div><div class="cell num" style="left:-1px;top:86px;width:55.5px;text-align:right">5</div><div class="cell num" style="left:62px;top:86px;width:100px">66607</div><div class="cell num" style="left:166px;top:86px;width:68px">4924</div><div class="cell nm" style="left:238px;top:86px;width:197px">ГРАНАТ 1КГ</div><div class="cell " style="left:439px;top:86px;width:22px">л</div><div class="cell num" style="left:597px;top:86px;width:48.5px;text-align:right">0,448</div><div class="cell num" style="left:649px;top:86px;width:48.5px;text-align:right">5,99</div><div class="cell num" style="left:701px;top:86px;width:61.5px;text-align:right">2,68</div><div class="cell " style="left:770px;top:86px;width:68px">Магазин 9</div><div class="cell num" style="left:1091px;top:86px;width:48.5px;text-align:right">4,5</div><div class="cell num" style="left:1143px;top:86px;width:61.5px;text-align:right">2,02</div><div class="abs" style="left:1092px;top:105px;width:132px;height:21px;background:#dcfbfb"></div><div class="hl" style="left:0;top:126px;width:1224px;background:#e6e6e6"></div><div class="vl" style="left:58px;top:105px;height:21px;background:#e6e6e6"></div><div class="vl" style="left:162px;top:105px;height:21px;background:#e6e6e6"></div><div class="vl" style="left:234px;top:105px;height:21px;background:#e6e6e6"></div><div class="vl" style="left:435px;top:105px;height:21px;background:#e6e6e6"></div><div class="vl" style="left:461px;top:105px;height:21px;background:#e6e6e6"></div><div class="vl" style="left:597px;top:105px;height:21px;background:#e6e6e6"></div><div class="vl" style="left:649px;top:105px;height:21px;background:#e6e6e6"></div><div class="vl" style="left:701px;top:105px;height:21px;background:#e6e6e6"></div><div class="vl" style="left:766px;top:105px;height:21px;background:#e6e6e6"></div><div class="vl" style="left:838px;top:105px;height:21px;background:#e6e6e6"></div><div class="vl" style="left:890px;top:105px;height:21px;background:#e6e6e6"></div><div class="vl" style="left:1091px;top:105px;height:21px;background:#e6e6e6"></div><div class="vl" style="left:1143px;top:105px;height:21px;background:#e6e6e6"></div><div class="vl" style="left:1208px;top:105px;height:21px;background:#e6e6e6"></div><div class="cell num" style="left:-1px;top:107px;width:55.5px;text-align:right">6</div><div class="cell num" style="left:62px;top:107px;width:100px">66149</div><div class="cell num" style="left:166px;top:107px;width:68px">5116</div><div class="cell nm" style="left:238px;top:107px;width:197px">ГРУША КИТАЙСКАЯ 1КГ</div><div class="cell " style="left:439px;top:107px;width:22px">л</div><div class="cell num" style="left:597px;top:107px;width:48.5px;text-align:right">1,24</div><div class="cell num" style="left:649px;top:107px;width:48.5px;text-align:right">3,99</div><div class="cell num" style="left:701px;top:107px;width:61.5px;text-align:right">4,95</div><div class="cell " style="left:770px;top:107px;width:68px">Магазин 9</div><div class="cell num" style="left:1091px;top:107px;width:48.5px;text-align:right">2,82</div><div class="cell num" style="left:1143px;top:107px;width:61.5px;text-align:right">3,5</div><div class="abs" style="left:1092px;top:126px;width:132px;height:21px;background:#dcfbfb"></div><div class="hl" style="left:0;top:147px;width:1224px;background:#e6e6e6"></div><div class="vl" style="left:58px;top:126px;height:21px;background:#e6e6e6"></div><div class="vl" style="left:162px;top:126px;height:21px;background:#e6e6e6"></div><div class="vl" style="left:234px;top:126px;height:21px;background:#e6e6e6"></div><div class="vl" style="left:435px;top:126px;height:21px;background:#e6e6e6"></div><div class="vl" style="left:461px;top:126px;height:21px;background:#e6e6e6"></div><div class="vl" style="left:597px;top:126px;height:21px;background:#e6e6e6"></div><div class="vl" style="left:649px;top:126px;height:21px;background:#e6e6e6"></div><div class="vl" style="left:701px;top:126px;height:21px;background:#e6e6e6"></div><div class="vl" style="left:766px;top:126px;height:21px;background:#e6e6e6"></div><div class="vl" style="left:838px;top:126px;height:21px;background:#e6e6e6"></div><div class="vl" style="left:890px;top:126px;height:21px;background:#e6e6e6"></div><div class="vl" style="left:1091px;top:126px;height:21px;background:#e6e6e6"></div><div class="vl" style="left:1143px;top:126px;height:21px;background:#e6e6e6"></div><div class="vl" style="left:1208px;top:126px;height:21px;background:#e6e6e6"></div><div class="cell num" style="left:-1px;top:128px;width:55.5px;text-align:right">7</div><div class="cell num" style="left:62px;top:128px;width:100px">66148</div><div class="cell num" style="left:166px;top:128px;width:68px">5118</div><div class="cell nm" style="left:238px;top:128px;width:197px">ГРУША КОМИС 1КГ</div><div class="cell " style="left:439px;top:128px;width:22px">л</div><div class="cell num" style="left:597px;top:128px;width:48.5px;text-align:right">2,34</div><div class="cell num" style="left:649px;top:128px;width:48.5px;text-align:right">2,59</div><div class="cell num" style="left:701px;top:128px;width:61.5px;text-align:right">6,06</div><div class="cell " style="left:770px;top:128px;width:68px">Магазин 9</div><div class="cell num" style="left:1091px;top:128px;width:48.5px;text-align:right">1,67</div><div class="cell num" style="left:1143px;top:128px;width:61.5px;text-align:right">3,91</div><div class="abs" style="left:1092px;top:147px;width:132px;height:21px;background:#dcfbfb"></div><div class="hl" style="left:0;top:168px;width:1224px;background:#e6e6e6"></div><div class="vl" style="left:58px;top:147px;height:21px;background:#e6e6e6"></div><div class="vl" style="left:162px;top:147px;height:21px;background:#e6e6e6"></div><div class="vl" style="left:234px;top:147px;height:21px;background:#e6e6e6"></div><div class="vl" style="left:435px;top:147px;height:21px;background:#e6e6e6"></div><div class="vl" style="left:461px;top:147px;height:21px;background:#e6e6e6"></div><div class="vl" style="left:597px;top:147px;height:21px;background:#e6e6e6"></div><div class="vl" style="left:649px;top:147px;height:21px;background:#e6e6e6"></div><div class="vl" style="left:701px;top:147px;height:21px;background:#e6e6e6"></div><div class="vl" style="left:766px;top:147px;height:21px;background:#e6e6e6"></div><div class="vl" style="left:838px;top:147px;height:21px;background:#e6e6e6"></div><div class="vl" style="left:890px;top:147px;height:21px;background:#e6e6e6"></div><div class="vl" style="left:1091px;top:147px;height:21px;background:#e6e6e6"></div><div class="vl" style="left:1143px;top:147px;height:21px;background:#e6e6e6"></div><div class="vl" style="left:1208px;top:147px;height:21px;background:#e6e6e6"></div><div class="cell num" style="left:-1px;top:149px;width:55.5px;text-align:right">8</div><div class="cell num" style="left:62px;top:149px;width:100px">66392</div><div class="cell num" style="left:166px;top:149px;width:68px">5123</div><div class="cell nm" style="left:238px;top:149px;width:197px">ГРУША КОНФЕРЕНЦИЯ КРУПНАЯ 1КГ</div><div class="cell " style="left:439px;top:149px;width:22px">л</div><div class="cell num" style="left:597px;top:149px;width:48.5px;text-align:right">0,85</div><div class="cell num" style="left:649px;top:149px;width:48.5px;text-align:right">3,29</div><div class="cell num" style="left:701px;top:149px;width:61.5px;text-align:right">2,8</div><div class="cell " style="left:770px;top:149px;width:68px">Магазин 9</div><div class="cell num" style="left:1091px;top:149px;width:48.5px;text-align:right">2,11</div><div class="cell num" style="left:1143px;top:149px;width:61.5px;text-align:right">1,79</div><div class="abs" style="left:1092px;top:168px;width:132px;height:21px;background:#dcfbfb"></div><div class="hl" style="left:0;top:189px;width:1224px;background:#e6e6e6"></div><div class="vl" style="left:58px;top:168px;height:21px;background:#e6e6e6"></div><div class="vl" style="left:162px;top:168px;height:21px;background:#e6e6e6"></div><div class="vl" style="left:234px;top:168px;height:21px;background:#e6e6e6"></div><div class="vl" style="left:435px;top:168px;height:21px;background:#e6e6e6"></div><div class="vl" style="left:461px;top:168px;height:21px;background:#e6e6e6"></div><div class="vl" style="left:597px;top:168px;height:21px;background:#e6e6e6"></div><div class="vl" style="left:649px;top:168px;height:21px;background:#e6e6e6"></div><div class="vl" style="left:701px;top:168px;height:21px;background:#e6e6e6"></div><div class="vl" style="left:766px;top:168px;height:21px;background:#e6e6e6"></div><div class="vl" style="left:838px;top:168px;height:21px;background:#e6e6e6"></div><div class="vl" style="left:890px;top:168px;height:21px;background:#e6e6e6"></div><div class="vl" style="left:1091px;top:168px;height:21px;background:#e6e6e6"></div><div class="vl" style="left:1143px;top:168px;height:21px;background:#e6e6e6"></div><div class="vl" style="left:1208px;top:168px;height:21px;background:#e6e6e6"></div><div class="cell num" style="left:-1px;top:170px;width:55.5px;text-align:right">9</div><div class="cell num" style="left:62px;top:170px;width:100px">66024</div><div class="cell num" style="left:166px;top:170px;width:68px">9021</div><div class="cell nm" style="left:238px;top:170px;width:197px">ИМБИРЬ 1КГ</div><div class="cell " style="left:439px;top:170px;width:22px">л</div><div class="cell num" style="left:597px;top:170px;width:48.5px;text-align:right">0,45</div><div class="cell num" style="left:649px;top:170px;width:48.5px;text-align:right">5,99</div><div class="cell num" style="left:701px;top:170px;width:61.5px;text-align:right">2,7</div><div class="cell " style="left:770px;top:170px;width:68px">Магазин 9</div><div class="cell num" style="left:1091px;top:170px;width:48.5px;text-align:right">3,05</div><div class="cell num" style="left:1143px;top:170px;width:61.5px;text-align:right">1,37</div><div class="abs" style="left:1092px;top:189px;width:132px;height:21px;background:#dcfbfb"></div><div class="hl" style="left:0;top:210px;width:1224px;background:#e6e6e6"></div><div class="vl" style="left:58px;top:189px;height:21px;background:#e6e6e6"></div><div class="vl" style="left:162px;top:189px;height:21px;background:#e6e6e6"></div><div class="vl" style="left:234px;top:189px;height:21px;background:#e6e6e6"></div><div class="vl" style="left:435px;top:189px;height:21px;background:#e6e6e6"></div><div class="vl" style="left:461px;top:189px;height:21px;background:#e6e6e6"></div><div class="vl" style="left:597px;top:189px;height:21px;background:#e6e6e6"></div><div class="vl" style="left:649px;top:189px;height:21px;background:#e6e6e6"></div><div class="vl" style="left:701px;top:189px;height:21px;background:#e6e6e6"></div><div class="vl" style="left:766px;top:189px;height:21px;background:#e6e6e6"></div><div class="vl" style="left:838px;top:189px;height:21px;background:#e6e6e6"></div><div class="vl" style="left:890px;top:189px;height:21px;background:#e6e6e6"></div><div class="vl" style="left:1091px;top:189px;height:21px;background:#e6e6e6"></div><div class="vl" style="left:1143px;top:189px;height:21px;background:#e6e6e6"></div><div class="vl" style="left:1208px;top:189px;height:21px;background:#e6e6e6"></div><div class="cell num" style="left:-1px;top:191px;width:55.5px;text-align:right">10</div><div class="cell num" style="left:62px;top:191px;width:100px">60139</div><div class="cell num" style="left:166px;top:191px;width:68px">9376</div><div class="cell nm" style="left:238px;top:191px;width:197px">КАБАЧОК 1КГ</div><div class="cell " style="left:439px;top:191px;width:22px">л</div><div class="cell num" style="left:597px;top:191px;width:48.5px;text-align:right">0</div><div class="cell num" style="left:649px;top:191px;width:48.5px;text-align:right">4,29</div><div class="cell num" style="left:701px;top:191px;width:61.5px;text-align:right">0</div><div class="cell " style="left:770px;top:191px;width:68px">Магазин 9</div><div class="cell num" style="left:1091px;top:191px;width:48.5px;text-align:right">3,15</div><div class="cell num" style="left:1143px;top:191px;width:61.5px;text-align:right">0</div><div class="abs" style="left:1092px;top:210px;width:132px;height:21px;background:#dcfbfb"></div><div class="hl" style="left:0;top:231px;width:1224px;background:#e6e6e6"></div><div class="vl" style="left:58px;top:210px;height:21px;background:#e6e6e6"></div><div class="vl" style="left:162px;top:210px;height:21px;background:#e6e6e6"></div><div class="vl" style="left:234px;top:210px;height:21px;background:#e6e6e6"></div><div class="vl" style="left:435px;top:210px;height:21px;background:#e6e6e6"></div><div class="vl" style="left:461px;top:210px;height:21px;background:#e6e6e6"></div><div class="vl" style="left:597px;top:210px;height:21px;background:#e6e6e6"></div><div class="vl" style="left:649px;top:210px;height:21px;background:#e6e6e6"></div><div class="vl" style="left:701px;top:210px;height:21px;background:#e6e6e6"></div><div class="vl" style="left:766px;top:210px;height:21px;background:#e6e6e6"></div><div class="vl" style="left:838px;top:210px;height:21px;background:#e6e6e6"></div><div class="vl" style="left:890px;top:210px;height:21px;background:#e6e6e6"></div><div class="vl" style="left:1091px;top:210px;height:21px;background:#e6e6e6"></div><div class="vl" style="left:1143px;top:210px;height:21px;background:#e6e6e6"></div><div class="vl" style="left:1208px;top:210px;height:21px;background:#e6e6e6"></div><div class="cell num" style="left:-1px;top:212px;width:55.5px;text-align:right">11</div><div class="cell num" style="left:62px;top:212px;width:100px">66190</div><div class="cell num" style="left:166px;top:212px;width:68px">9380</div><div class="cell nm" style="left:238px;top:212px;width:197px">КАБАЧОК ЦУКИНИ 1КГ</div><div class="cell " style="left:439px;top:212px;width:22px">л</div><div class="cell num" style="left:597px;top:212px;width:48.5px;text-align:right">3,2</div><div class="cell num" style="left:649px;top:212px;width:48.5px;text-align:right">4,29</div><div class="cell num" style="left:701px;top:212px;width:61.5px;text-align:right">13,73</div><div class="cell " style="left:770px;top:212px;width:68px">Магазин 9</div><div class="cell num" style="left:1091px;top:212px;width:48.5px;text-align:right">3,15</div><div class="cell num" style="left:1143px;top:212px;width:61.5px;text-align:right">10,08</div><div class="abs" style="left:1092px;top:231px;width:132px;height:21px;background:#dcfbfb"></div><div class="hl" style="left:0;top:252px;width:1224px;background:#e6e6e6"></div><div class="vl" style="left:58px;top:231px;height:21px;background:#e6e6e6"></div><div class="vl" style="left:162px;top:231px;height:21px;background:#e6e6e6"></div><div class="vl" style="left:234px;top:231px;height:21px;background:#e6e6e6"></div><div class="vl" style="left:435px;top:231px;height:21px;background:#e6e6e6"></div><div class="vl" style="left:461px;top:231px;height:21px;background:#e6e6e6"></div><div class="vl" style="left:597px;top:231px;height:21px;background:#e6e6e6"></div><div class="vl" style="left:649px;top:231px;height:21px;background:#e6e6e6"></div><div class="vl" style="left:701px;top:231px;height:21px;background:#e6e6e6"></div><div class="vl" style="left:766px;top:231px;height:21px;background:#e6e6e6"></div><div class="vl" style="left:838px;top:231px;height:21px;background:#e6e6e6"></div><div class="vl" style="left:890px;top:231px;height:21px;background:#e6e6e6"></div><div class="vl" style="left:1091px;top:231px;height:21px;background:#e6e6e6"></div><div class="vl" style="left:1143px;top:231px;height:21px;background:#e6e6e6"></div><div class="vl" style="left:1208px;top:231px;height:21px;background:#e6e6e6"></div><div class="cell num" style="left:-1px;top:233px;width:55.5px;text-align:right">12</div><div class="cell num" style="left:62px;top:233px;width:100px">66155</div><div class="cell num" style="left:166px;top:233px;width:68px">9477</div><div class="cell nm" style="left:238px;top:233px;width:197px">КАПУСТА БРОККОЛИ 1КГ</div><div class="cell " style="left:439px;top:233px;width:22px">л</div><div class="cell num" style="left:597px;top:233px;width:48.5px;text-align:right">1,012</div><div class="cell num" style="left:649px;top:233px;width:48.5px;text-align:right">4,49</div><div class="cell num" style="left:701px;top:233px;width:61.5px;text-align:right">4,54</div><div class="cell " style="left:770px;top:233px;width:68px">Магазин 9</div><div class="cell num" style="left:1091px;top:233px;width:48.5px;text-align:right">3,62</div><div class="cell num" style="left:1143px;top:233px;width:61.5px;text-align:right">3,66</div><div class="abs" style="left:1092px;top:252px;width:132px;height:21px;background:#dcfbfb"></div><div class="hl" style="left:0;top:273px;width:1224px;background:#e6e6e6"></div><div class="vl" style="left:58px;top:252px;height:21px;background:#e6e6e6"></div><div class="vl" style="left:162px;top:252px;height:21px;background:#e6e6e6"></div><div class="vl" style="left:234px;top:252px;height:21px;background:#e6e6e6"></div><div class="vl" style="left:435px;top:252px;height:21px;background:#e6e6e6"></div><div class="vl" style="left:461px;top:252px;height:21px;background:#e6e6e6"></div><div class="vl" style="left:597px;top:252px;height:21px;background:#e6e6e6"></div><div class="vl" style="left:649px;top:252px;height:21px;background:#e6e6e6"></div><div class="vl" style="left:701px;top:252px;height:21px;background:#e6e6e6"></div><div class="vl" style="left:766px;top:252px;height:21px;background:#e6e6e6"></div><div class="vl" style="left:838px;top:252px;height:21px;background:#e6e6e6"></div><div class="vl" style="left:890px;top:252px;height:21px;background:#e6e6e6"></div><div class="vl" style="left:1091px;top:252px;height:21px;background:#e6e6e6"></div><div class="vl" style="left:1143px;top:252px;height:21px;background:#e6e6e6"></div><div class="vl" style="left:1208px;top:252px;height:21px;background:#e6e6e6"></div><div class="cell num" style="left:-1px;top:254px;width:55.5px;text-align:right">13</div><div class="cell num" style="left:62px;top:254px;width:100px">66141</div><div class="cell num" style="left:166px;top:254px;width:68px">9522</div><div class="cell nm" style="left:238px;top:254px;width:197px">КАПУСТА КОЛЬРАБИ 1КГ</div><div class="cell " style="left:439px;top:254px;width:22px">л</div><div class="cell num" style="left:597px;top:254px;width:48.5px;text-align:right">0,34</div><div class="cell num" style="left:649px;top:254px;width:48.5px;text-align:right">7,99</div><div class="cell num" style="left:701px;top:254px;width:61.5px;text-align:right">2,72</div><div class="cell " style="left:770px;top:254px;width:68px">Магазин 9</div><div class="cell num" style="left:1091px;top:254px;width:48.5px;text-align:right">4,33</div><div class="cell num" style="left:1143px;top:254px;width:61.5px;text-align:right">1,47</div><div class="abs" style="left:1092px;top:273px;width:132px;height:21px;background:#dcfbfb"></div><div class="hl" style="left:0;top:294px;width:1224px;background:#e6e6e6"></div><div class="vl" style="left:58px;top:273px;height:21px;background:#e6e6e6"></div><div class="vl" style="left:162px;top:273px;height:21px;background:#e6e6e6"></div><div class="vl" style="left:234px;top:273px;height:21px;background:#e6e6e6"></div><div class="vl" style="left:435px;top:273px;height:21px;background:#e6e6e6"></div><div class="vl" style="left:461px;top:273px;height:21px;background:#e6e6e6"></div><div class="vl" style="left:597px;top:273px;height:21px;background:#e6e6e6"></div><div class="vl" style="left:649px;top:273px;height:21px;background:#e6e6e6"></div><div class="vl" style="left:701px;top:273px;height:21px;background:#e6e6e6"></div><div class="vl" style="left:766px;top:273px;height:21px;background:#e6e6e6"></div><div class="vl" style="left:838px;top:273px;height:21px;background:#e6e6e6"></div><div class="vl" style="left:890px;top:273px;height:21px;background:#e6e6e6"></div><div class="vl" style="left:1091px;top:273px;height:21px;background:#e6e6e6"></div><div class="vl" style="left:1143px;top:273px;height:21px;background:#e6e6e6"></div><div class="vl" style="left:1208px;top:273px;height:21px;background:#e6e6e6"></div></div><div class="abs" style="left:1544px;top:577px;width:8px;height:130px;background:#d9d9d9"></div><div class="abs" style="left:320px;top:910px;width:943px;height:8px;background:#d9d9d9"></div><div class="hl" style="left:313px;top:945px;width:1247px;background:#d4d4d4"></div></body></html>
